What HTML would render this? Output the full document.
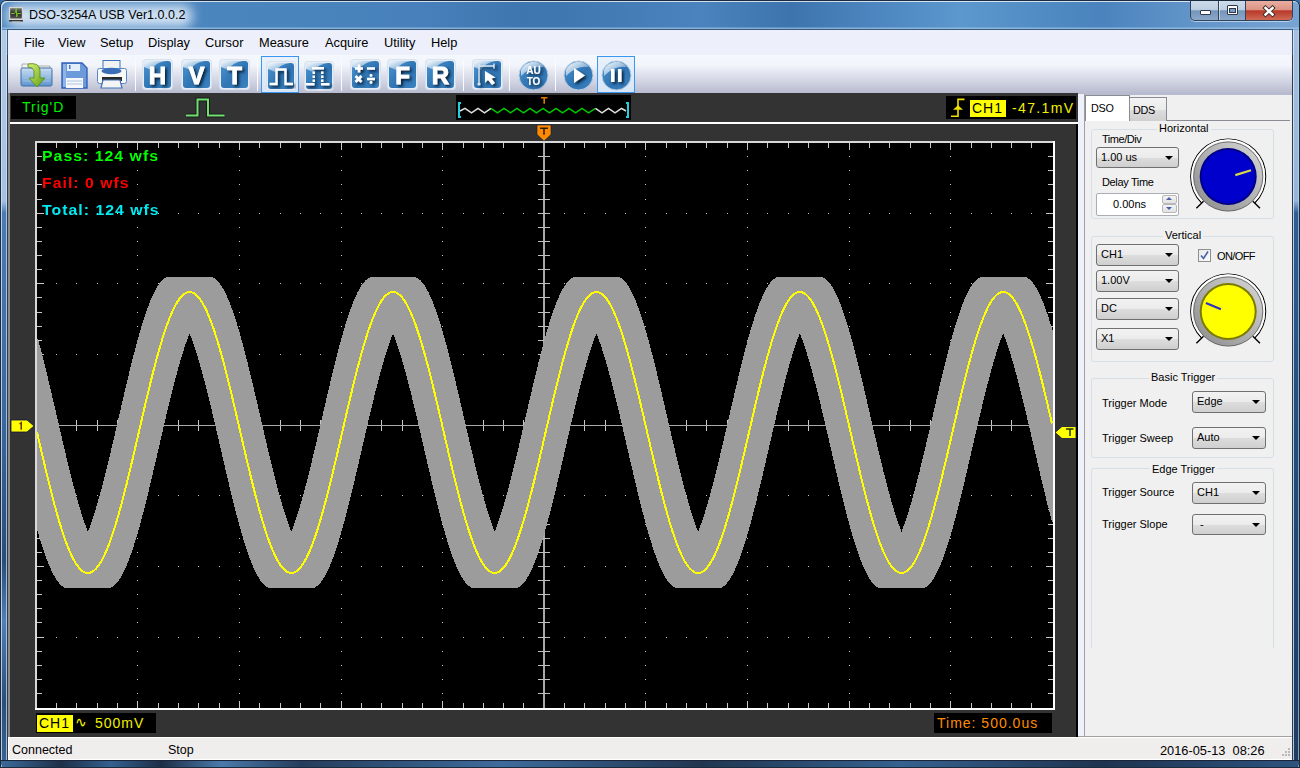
<!DOCTYPE html>
<html><head><meta charset="utf-8">
<style>
*{margin:0;padding:0;box-sizing:border-box}
html,body{width:1300px;height:768px;overflow:hidden;background:#3a6ea8;font-family:"Liberation Sans",sans-serif}
.a{position:absolute}
#frame{left:0;top:0;width:1300px;height:768px;border-radius:7px 7px 0 0;background:#1c2c40}
#lf{left:0px;top:1px;width:8px;height:766px;border-radius:6px 0 0 0;background:linear-gradient(180deg,#b3cbe6 0,#a6c1e0 200px,#4a7bb4 212px,#3a679c 420px,#294d78 560px,#4f80b6 620px,#2a4e78 700px,#3a6494 767px);border-left:1px solid #1c2c40;border-right:1px solid #2a3a50;box-shadow:inset 1px 0 0 rgba(214,228,243,0.8),inset -1px 0 0 rgba(216,228,242,0.7)}
#rf{left:1292px;top:1px;width:8px;height:766px;border-radius:0 6px 0 0;background:linear-gradient(180deg,#a9c3e0 0,#95b4d8 200px,#2f5e95 212px,#24507f 400px,#1d3c62 767px);border-left:1px solid #2a3a50;border-right:1px solid #1c2c40;box-shadow:inset 1px 0 0 rgba(220,232,245,0.8),inset -1px 0 0 rgba(200,218,238,0.6)}
#bf{left:1px;top:760px;width:1298px;height:7px;background:linear-gradient(90deg,#3c6a9c 0,#1e3048 60px,#35608f 110px,#1c2e46 160px,#4a7aab 220px,#253d5c 300px,#3e6b9c 500px,#203650 700px,#36628f 900px,#1e3350 1100px,#2d547f 1299px);border-top:1px solid #1a2638;border-radius:0 0 4px 4px}
#title{left:1px;top:1px;width:1298px;height:29px;background:linear-gradient(90deg,#4f88c0 0,#4a84bd 300px,#4780ba 420px,#3e76b0 520px,#3f78b1 560px,#4a83bd 700px,#3d74ad 790px,#4c85bf 870px,#5c97cd 960px,#4a83bd 1100px,#5f93c8 1180px,#78a4d2 1298px);border-radius:6px 6px 0 0;overflow:hidden;box-shadow:inset 1px 1px 0 rgba(255,255,255,0.75)}
#glow{left:6px;top:4px;width:185px;height:22px;background:#d2e3f4;filter:blur(6px);border-radius:8px}
#ttext{left:29px;top:8px;font-size:12.5px;color:#000;white-space:nowrap}
#menu{left:7px;top:29px;width:1286px;height:26px;background:#edf0fa;border-top:1px solid #3a5a80;border-left:1px solid #3a5a80;border-right:1px solid #3a5a80}
.mi{top:35px;font-size:12.8px;color:#000}
#tool{left:8px;top:55px;width:1284px;height:40px;background:linear-gradient(180deg,#f4f7fc 0,#f2f5fb 10px,#e2e5ef 18px,#d0d3e1 27px,#bbbdd1 37px,#b8bacf 38px)}
#scope{left:8px;top:93px;width:1070px;height:644px;background:#333;border-left:2px solid #8a8a8a}
#rstrip{left:1078px;top:94px;width:7px;height:643px;background:#eef0fa;border-right:1px solid #a0a0a0}
#panel{left:1085px;top:95px;width:207px;height:642px;background:#f0f0f0}
#status{left:8px;top:737px;width:1284px;height:23px;background:#f0eded;border-top:1px solid #fff;border-left:1px solid #fff;border-bottom:1px solid #fff}
.st{top:743px;font-size:12.5px;color:#000}
.sc{font-family:"Liberation Sans",sans-serif;white-space:nowrap;letter-spacing:1px}
.p{font-size:11px;color:#000;white-space:nowrap}
.gb{border:1px solid #d5dfe5;border-radius:3px}
.gl{background:#f0f0f0;padding:0 2px;font-size:11px;color:#000;white-space:nowrap}
.cb{border:1px solid #707070;border-radius:3px;background:linear-gradient(180deg,#f2f2f2 0,#ebebeb 50%,#dddddd 51%,#cfcfcf 100%);font-size:11px;color:#000;padding-left:4px;line-height:19px;white-space:nowrap}
.cb:after{content:"";position:absolute;right:5px;top:8px;border-left:4px solid transparent;border-right:4px solid transparent;border-top:4px solid #000}
</style></head><body>
<div id="frame" class="a"></div>
<div id="lf" class="a"></div><div id="rf" class="a"></div><div id="bf" class="a"></div><div id="title" class="a"><div id="glow" class="a"></div><div class="a" style="left:0;top:26px;width:1298px;height:2px;background:linear-gradient(180deg,rgba(170,205,235,0.2),rgba(170,205,235,0.75))"></div></div>
<svg class="a" style="left:9px;top:7px" width="14" height="16" viewBox="0 0 14 16">
<defs><linearGradient id="scr" x1="0" y1="0" x2="0" y2="1"><stop offset="0" stop-color="#777"/><stop offset="0.5" stop-color="#2a2a2a"/><stop offset="1" stop-color="#555"/></linearGradient></defs>
<rect x="0" y="0" width="14" height="13.5" fill="#d8d6d2"/>
<rect x="1.2" y="1.2" width="11.6" height="10.3" fill="url(#scr)"/>
<path d="M2 6.5 h3.5 l1 -1.5 l0.8 -4 l0.4 9 l0.8 -3.5 h3.5" fill="none" stroke="#78c020" stroke-width="1"/>
<rect x="0" y="13.2" width="14" height="1.2" fill="#111"/>
<rect x="3" y="14.4" width="8" height="1.4" fill="#bdbdbd"/>
</svg>

<div id="ttext" class="a">DSO-3254A USB Ver1.0.0.2</div>
<div class="a" style="left:1190px;top:1px;width:103px;height:20px;border:1px solid #2f435a;border-top:none;border-radius:0 0 5px 5px;overflow:hidden;box-shadow:0 1px 0 rgba(230,240,250,0.6);background:linear-gradient(180deg,#cddbea 0,#bccfe2 45%,#7595b9 52%,#8aa8c9 100%)">
<div class="a" style="left:27px;top:0;width:1px;height:19px;background:#2f435a;box-shadow:1px 0 0 rgba(255,255,255,0.5)"></div>
<div class="a" style="left:54px;top:0;width:1px;height:19px;background:#2f435a"></div>
<div class="a" style="left:55px;top:0;width:47px;height:19px;background:linear-gradient(180deg,#e9aea2 0,#dc9484 45%,#b8392a 52%,#cf6a55 100%)"></div>
<div class="a" style="left:9px;top:9px;width:11px;height:5px;background:#fff;border:1px solid #303848;border-radius:1px"></div>
<div class="a" style="left:36px;top:4px;width:11px;height:10px;border:1px solid #303848;background:#fff;border-radius:1px"></div>
<div class="a" style="left:38px;top:7px;width:7px;height:5px;border:1px solid #303848;background:#7a9cc4"></div>
<svg class="a" style="left:71px;top:4px" width="15" height="13"><path d="M3.5 3 L10.5 9.5 M10.5 3 L3.5 9.5" stroke="#3a3030" stroke-width="4.4" stroke-linecap="square"/><path d="M3.5 3 L10.5 9.5 M10.5 3 L3.5 9.5" stroke="#fff" stroke-width="2.4" stroke-linecap="square"/></svg>
</div>

<div id="menu" class="a"></div>
<div class="a mi" style="left:24px">File</div>
<div class="a mi" style="left:58px">View</div>
<div class="a mi" style="left:100px">Setup</div>
<div class="a mi" style="left:148px">Display</div>
<div class="a mi" style="left:205px">Cursor</div>
<div class="a mi" style="left:259px">Measure</div>
<div class="a mi" style="left:325px">Acquire</div>
<div class="a mi" style="left:384px">Utility</div>
<div class="a mi" style="left:431px">Help</div>
<div id="tool" class="a"></div>
<svg class="a" width="0" height="0" style="left:0;top:0"><defs>
<linearGradient id="bg1" x1="0" y1="0" x2="1" y2="1"><stop offset="0" stop-color="#4d96d2"/><stop offset="0.55" stop-color="#2f74b3"/><stop offset="1" stop-color="#3a82c0"/></linearGradient>
<linearGradient id="hl" x1="0" y1="0" x2="1" y2="1"><stop offset="0" stop-color="#ffffff" stop-opacity="0.95"/><stop offset="1" stop-color="#ffffff" stop-opacity="0.1"/></linearGradient>
<filter id="ds" x="-30%" y="-30%" width="160%" height="160%"><feGaussianBlur in="SourceAlpha" stdDeviation="1.4"/><feOffset dx="1.6" dy="1.8" result="b"/><feFlood flood-color="#081a30" flood-opacity="0.95"/><feComposite in2="b" operator="in"/><feMerge><feMergeNode/><feMergeNode in="SourceGraphic"/></feMerge></filter>
</defs></svg>
<div class="a" style="left:261px;top:56px;width:38px;height:37px;border:1.5px solid #3b96f0;background:linear-gradient(180deg,#e9f2fc,#d6e6f7)"></div>
<div class="a" style="left:597px;top:56px;width:38px;height:37px;border:1.5px solid #3b96f0;background:linear-gradient(180deg,#e9f2fc,#d6e6f7)"></div>
<div class="a" style="left:135px;top:58px;width:1px;height:33px;background:#c4c7d4;border-right:1px solid #fafbfe"></div>
<div class="a" style="left:257px;top:58px;width:1px;height:33px;background:#c4c7d4;border-right:1px solid #fafbfe"></div>
<div class="a" style="left:341px;top:58px;width:1px;height:33px;background:#c4c7d4;border-right:1px solid #fafbfe"></div>
<div class="a" style="left:463px;top:58px;width:1px;height:33px;background:#c4c7d4;border-right:1px solid #fafbfe"></div>
<div class="a" style="left:509px;top:58px;width:1px;height:33px;background:#c4c7d4;border-right:1px solid #fafbfe"></div>
<div class="a" style="left:555px;top:58px;width:1px;height:33px;background:#c4c7d4;border-right:1px solid #fafbfe"></div>
<svg class="a" style="left:142px;top:59px" width="31" height="31" viewBox="0 0 31 31"><rect x="0.5" y="0.5" width="30" height="30" rx="3" fill="#e6edf6" stroke="#d8e2ee" stroke-width="1"/><rect x="2" y="2" width="27" height="27" rx="3" fill="url(#bg1)"/><path d="M2 4 Q2 2 4 2 H24 Q14 3 9 11 Q5 9 2 8 Z" fill="url(#hl)"/><text x="15.5" y="25" font-family="Liberation Sans" font-weight="bold" font-size="24" fill="#fff" stroke="#fff" stroke-width="0.9" text-anchor="middle" filter="url(#ds)">H</text></svg>
<svg class="a" style="left:181px;top:59px" width="31" height="31" viewBox="0 0 31 31"><rect x="0.5" y="0.5" width="30" height="30" rx="3" fill="#e6edf6" stroke="#d8e2ee" stroke-width="1"/><rect x="2" y="2" width="27" height="27" rx="3" fill="url(#bg1)"/><path d="M2 4 Q2 2 4 2 H24 Q14 3 9 11 Q5 9 2 8 Z" fill="url(#hl)"/><text x="15.5" y="25" font-family="Liberation Sans" font-weight="bold" font-size="24" fill="#fff" stroke="#fff" stroke-width="0.9" text-anchor="middle" filter="url(#ds)">V</text></svg>
<svg class="a" style="left:219px;top:59px" width="31" height="31" viewBox="0 0 31 31"><rect x="0.5" y="0.5" width="30" height="30" rx="3" fill="#e6edf6" stroke="#d8e2ee" stroke-width="1"/><rect x="2" y="2" width="27" height="27" rx="3" fill="url(#bg1)"/><path d="M2 4 Q2 2 4 2 H24 Q14 3 9 11 Q5 9 2 8 Z" fill="url(#hl)"/><text x="15.5" y="25" font-family="Liberation Sans" font-weight="bold" font-size="24" fill="#fff" stroke="#fff" stroke-width="0.9" text-anchor="middle" filter="url(#ds)">T</text></svg>
<svg class="a" style="left:266px;top:61px" width="30" height="30" viewBox="0 0 30 30"><rect x="0.5" y="0.5" width="29" height="29" rx="3" fill="#e6edf6" stroke="#d8e2ee" stroke-width="1"/><rect x="2" y="2" width="26" height="26" rx="3" fill="url(#bg1)"/><path d="M2 4 Q2 2 4 2 H24 Q14 3 9 11 Q5 9 2 8 Z" fill="url(#hl)"/><path d="M3.5 23 h7 v-14.5 h9 v14.5 h7.5" fill="none" stroke="#fff" stroke-width="2.4" filter="url(#ds)"/></svg>
<svg class="a" style="left:304px;top:61px" width="30" height="30" viewBox="0 0 30 30"><rect x="0.5" y="0.5" width="29" height="29" rx="3" fill="#e6edf6" stroke="#d8e2ee" stroke-width="1"/><rect x="2" y="2" width="26" height="26" rx="3" fill="url(#bg1)"/><path d="M2 4 Q2 2 4 2 H24 Q14 3 9 11 Q5 9 2 8 Z" fill="url(#hl)"/><g fill="#fff" filter="url(#ds)"><rect x="8" y="6" width="12" height="2.5"/><rect x="8.5" y="10.5" width="2.5" height="2.5"/><rect x="17" y="10.5" width="2.5" height="2.5"/><rect x="8.5" y="14.5" width="2.5" height="2.5"/><rect x="17" y="14.5" width="2.5" height="2.5"/><rect x="8.5" y="18.5" width="2.5" height="2.5"/><rect x="17" y="18.5" width="2.5" height="2.5"/><rect x="2" y="22" width="8.5" height="2.5"/><rect x="17" y="22" width="8.5" height="2.5"/></g></svg>
<svg class="a" style="left:350px;top:59px" width="31" height="31" viewBox="0 0 31 31"><rect x="0.5" y="0.5" width="30" height="30" rx="3" fill="#e6edf6" stroke="#d8e2ee" stroke-width="1"/><rect x="2" y="2" width="27" height="27" rx="3" fill="url(#bg1)"/><path d="M2 4 Q2 2 4 2 H24 Q14 3 9 11 Q5 9 2 8 Z" fill="url(#hl)"/><g fill="#fff" filter="url(#ds)"><path d="M5 9.5 h8 M9 5.5 v8 M17 9.5 h8 M5.5 17 l6 6 M11.5 17 l-6 6 M17 20 h8" stroke="#fff" stroke-width="2.6"/><circle cx="21" cy="16.5" r="1.4"/><circle cx="21" cy="23.5" r="1.4"/></g></svg>
<svg class="a" style="left:387px;top:59px" width="31" height="31" viewBox="0 0 31 31"><rect x="0.5" y="0.5" width="30" height="30" rx="3" fill="#e6edf6" stroke="#d8e2ee" stroke-width="1"/><rect x="2" y="2" width="27" height="27" rx="3" fill="url(#bg1)"/><path d="M2 4 Q2 2 4 2 H24 Q14 3 9 11 Q5 9 2 8 Z" fill="url(#hl)"/><text x="15.5" y="25" font-family="Liberation Sans" font-weight="bold" font-size="24" fill="#fff" stroke="#fff" stroke-width="0.9" text-anchor="middle" filter="url(#ds)">F</text></svg>
<svg class="a" style="left:425px;top:59px" width="31" height="31" viewBox="0 0 31 31"><rect x="0.5" y="0.5" width="30" height="30" rx="3" fill="#e6edf6" stroke="#d8e2ee" stroke-width="1"/><rect x="2" y="2" width="27" height="27" rx="3" fill="url(#bg1)"/><path d="M2 4 Q2 2 4 2 H24 Q14 3 9 11 Q5 9 2 8 Z" fill="url(#hl)"/><text x="15.5" y="25" font-family="Liberation Sans" font-weight="bold" font-size="24" fill="#fff" stroke="#fff" stroke-width="0.9" text-anchor="middle" filter="url(#ds)">R</text></svg>
<svg class="a" style="left:472px;top:59px" width="31" height="31" viewBox="0 0 31 31"><rect x="0.5" y="0.5" width="30" height="30" rx="3" fill="#e6edf6" stroke="#d8e2ee" stroke-width="1"/><rect x="2" y="2" width="27" height="27" rx="3" fill="url(#bg1)"/><path d="M2 4 Q2 2 4 2 H24 Q14 3 9 11 Q5 9 2 8 Z" fill="url(#hl)"/><g filter="url(#ds)"><path d="M7 5 v20 M7 7 h15 M22 4.5 v5" fill="none" stroke="#d8e4f0" stroke-width="1.4"/><circle cx="7" cy="25" r="1.6" fill="#d8e4f0"/><path d="M13 12 L13 24 L16 21 L20 26 L23 24 L19.5 19.5 L23.5 18.5 Z" fill="#fff"/></g></svg>
<svg class="a" style="left:518px;top:60px" width="31" height="31" viewBox="0 0 31 31"><circle cx="15.5" cy="15.5" r="14.5" fill="url(#bg1)" stroke="#b8cde0" stroke-width="1"/><path d="M3 10 A13.5 13.5 0 0 1 26 7 Q14 5 3 16 Z" fill="url(#hl)"/><g filter="url(#ds)"><text x="15.5" y="14" font-family="Liberation Sans" font-weight="bold" font-size="10" fill="#fff" text-anchor="middle">AU</text><text x="15.5" y="24.5" font-family="Liberation Sans" font-weight="bold" font-size="10" fill="#fff" text-anchor="middle">TO</text></g></svg>
<svg class="a" style="left:563px;top:60px" width="31" height="31" viewBox="0 0 31 31"><circle cx="15.5" cy="15.5" r="14.5" fill="url(#bg1)" stroke="#b8cde0" stroke-width="1"/><path d="M3 10 A13.5 13.5 0 0 1 26 7 Q14 5 3 16 Z" fill="url(#hl)"/><path d="M11 8 L22 15.5 L11 23 Z" fill="#fff" filter="url(#ds)"/></svg>
<svg class="a" style="left:601px;top:60px" width="31" height="31" viewBox="0 0 31 31"><circle cx="15.5" cy="15.5" r="14.5" fill="url(#bg1)" stroke="#b8cde0" stroke-width="1"/><path d="M3 10 A13.5 13.5 0 0 1 26 7 Q14 5 3 16 Z" fill="url(#hl)"/><g fill="#fff" filter="url(#ds)"><rect x="10" y="9" width="3.5" height="13"/><rect x="17" y="9" width="3.5" height="13"/></g></svg>
<svg class="a" style="left:19px;top:60px" width="34" height="30" viewBox="0 0 34 30">
<defs><linearGradient id="fd" x1="0" y1="0" x2="0" y2="1"><stop offset="0" stop-color="#cfe0f2"/><stop offset="1" stop-color="#5d94cf"/></linearGradient>
<linearGradient id="ar" x1="0" y1="0" x2="1" y2="1"><stop offset="0" stop-color="#d9f07a"/><stop offset="1" stop-color="#5f9e10"/></linearGradient></defs>
<path d="M3 4 h9 l2 2 h17 v4 H3 Z" fill="#f4f4f4" stroke="#a0a0a0" stroke-width="0.8"/>
<rect x="2" y="8" width="31" height="18" rx="1.5" fill="url(#fd)" stroke="#3c6fa8" stroke-width="1"/>
<path d="M4 12 h27 M4 15 h27 M4 18 h27 M4 21 h27" stroke="#a8c8e8" stroke-width="0.7"/>
<path d="M9 4 Q20 2 21 10 V18 h5 L18 27 L10 18 h5 V11 Q14 7 9 7 Z" fill="url(#ar)" stroke="#4f8a10" stroke-width="0.8"/>
</svg>
<svg class="a" style="left:61px;top:62px" width="28" height="27" viewBox="0 0 28 27">
<path d="M1 1 H21 L26 6 V26 H1 Z" fill="#6d9ad8" stroke="#2f62b8" stroke-width="1.4"/>
<rect x="6" y="2" width="13" height="7" fill="#e4eefa"/><rect x="8" y="3" width="1.5" height="4" fill="#4a7bc4"/>
<rect x="5" y="16" width="17" height="10" fill="#f6f8fc"/>
<path d="M6 19 h15 M6 22 h15" stroke="#9bb6dd" stroke-width="0.8"/>
<rect x="2" y="2" width="3" height="23" fill="#8fb4e6"/>
</svg>
<svg class="a" style="left:96px;top:59px" width="32" height="31" viewBox="0 0 32 31">
<rect x="7" y="1.5" width="17" height="12" fill="#f2f2f2" stroke="#3f74b8" stroke-width="1"/>
<rect x="1.5" y="9.5" width="29" height="15" rx="2" fill="#f8f8f8" stroke="#5a88c4" stroke-width="1"/>
<ellipse cx="15.5" cy="12" rx="10" ry="3.3" fill="#3a6fb8"/>
<rect x="6" y="18" width="20" height="4" fill="#2a2a2a"/>
<path d="M7 21 L5 29 H26 L24 21 Z" fill="#f4f4f4" stroke="#3f74b8" stroke-width="1.2"/>
</svg>
<div id="scope" class="a"></div>
<svg class="a" style="left:0;top:0" width="1300" height="768" viewBox="0 0 1300 768">
<rect x="1076" y="124" width="2" height="613" fill="#000"/>
<rect x="10" y="122" width="1068" height="2" fill="#fff"/>
<rect x="11" y="96" width="65" height="23" fill="#000"/>
<rect x="456" y="95" width="175" height="25" fill="#000"/>
<rect x="946" y="96" width="130" height="23" fill="#000"/>
<rect x="37" y="143" width="1016" height="565" fill="#000"/>
<path fill="#c8c8c8" d="M137 156h1v1h-1zM137 170h1v1h-1zM137 184h1v1h-1zM137 199h1v1h-1zM137 213h1v1h-1zM137 227h1v1h-1zM137 241h1v1h-1zM137 255h1v1h-1zM137 269h1v1h-1zM137 283h1v1h-1zM137 297h1v1h-1zM137 312h1v1h-1zM137 326h1v1h-1zM137 340h1v1h-1zM137 354h1v1h-1zM137 368h1v1h-1zM137 382h1v1h-1zM137 396h1v1h-1zM137 410h1v1h-1zM137 425h1v1h-1zM137 439h1v1h-1zM137 453h1v1h-1zM137 467h1v1h-1zM137 481h1v1h-1zM137 495h1v1h-1zM137 509h1v1h-1zM137 524h1v1h-1zM137 538h1v1h-1zM137 552h1v1h-1zM137 566h1v1h-1zM137 580h1v1h-1zM137 594h1v1h-1zM137 608h1v1h-1zM137 622h1v1h-1zM137 637h1v1h-1zM137 651h1v1h-1zM137 665h1v1h-1zM137 679h1v1h-1zM137 693h1v1h-1zM239 156h1v1h-1zM239 170h1v1h-1zM239 184h1v1h-1zM239 199h1v1h-1zM239 213h1v1h-1zM239 227h1v1h-1zM239 241h1v1h-1zM239 255h1v1h-1zM239 269h1v1h-1zM239 283h1v1h-1zM239 297h1v1h-1zM239 312h1v1h-1zM239 326h1v1h-1zM239 340h1v1h-1zM239 354h1v1h-1zM239 368h1v1h-1zM239 382h1v1h-1zM239 396h1v1h-1zM239 410h1v1h-1zM239 425h1v1h-1zM239 439h1v1h-1zM239 453h1v1h-1zM239 467h1v1h-1zM239 481h1v1h-1zM239 495h1v1h-1zM239 509h1v1h-1zM239 524h1v1h-1zM239 538h1v1h-1zM239 552h1v1h-1zM239 566h1v1h-1zM239 580h1v1h-1zM239 594h1v1h-1zM239 608h1v1h-1zM239 622h1v1h-1zM239 637h1v1h-1zM239 651h1v1h-1zM239 665h1v1h-1zM239 679h1v1h-1zM239 693h1v1h-1zM341 156h1v1h-1zM341 170h1v1h-1zM341 184h1v1h-1zM341 199h1v1h-1zM341 213h1v1h-1zM341 227h1v1h-1zM341 241h1v1h-1zM341 255h1v1h-1zM341 269h1v1h-1zM341 283h1v1h-1zM341 297h1v1h-1zM341 312h1v1h-1zM341 326h1v1h-1zM341 340h1v1h-1zM341 354h1v1h-1zM341 368h1v1h-1zM341 382h1v1h-1zM341 396h1v1h-1zM341 410h1v1h-1zM341 425h1v1h-1zM341 439h1v1h-1zM341 453h1v1h-1zM341 467h1v1h-1zM341 481h1v1h-1zM341 495h1v1h-1zM341 509h1v1h-1zM341 524h1v1h-1zM341 538h1v1h-1zM341 552h1v1h-1zM341 566h1v1h-1zM341 580h1v1h-1zM341 594h1v1h-1zM341 608h1v1h-1zM341 622h1v1h-1zM341 637h1v1h-1zM341 651h1v1h-1zM341 665h1v1h-1zM341 679h1v1h-1zM341 693h1v1h-1zM442 156h1v1h-1zM442 170h1v1h-1zM442 184h1v1h-1zM442 199h1v1h-1zM442 213h1v1h-1zM442 227h1v1h-1zM442 241h1v1h-1zM442 255h1v1h-1zM442 269h1v1h-1zM442 283h1v1h-1zM442 297h1v1h-1zM442 312h1v1h-1zM442 326h1v1h-1zM442 340h1v1h-1zM442 354h1v1h-1zM442 368h1v1h-1zM442 382h1v1h-1zM442 396h1v1h-1zM442 410h1v1h-1zM442 425h1v1h-1zM442 439h1v1h-1zM442 453h1v1h-1zM442 467h1v1h-1zM442 481h1v1h-1zM442 495h1v1h-1zM442 509h1v1h-1zM442 524h1v1h-1zM442 538h1v1h-1zM442 552h1v1h-1zM442 566h1v1h-1zM442 580h1v1h-1zM442 594h1v1h-1zM442 608h1v1h-1zM442 622h1v1h-1zM442 637h1v1h-1zM442 651h1v1h-1zM442 665h1v1h-1zM442 679h1v1h-1zM442 693h1v1h-1zM645 156h1v1h-1zM645 170h1v1h-1zM645 184h1v1h-1zM645 199h1v1h-1zM645 213h1v1h-1zM645 227h1v1h-1zM645 241h1v1h-1zM645 255h1v1h-1zM645 269h1v1h-1zM645 283h1v1h-1zM645 297h1v1h-1zM645 312h1v1h-1zM645 326h1v1h-1zM645 340h1v1h-1zM645 354h1v1h-1zM645 368h1v1h-1zM645 382h1v1h-1zM645 396h1v1h-1zM645 410h1v1h-1zM645 425h1v1h-1zM645 439h1v1h-1zM645 453h1v1h-1zM645 467h1v1h-1zM645 481h1v1h-1zM645 495h1v1h-1zM645 509h1v1h-1zM645 524h1v1h-1zM645 538h1v1h-1zM645 552h1v1h-1zM645 566h1v1h-1zM645 580h1v1h-1zM645 594h1v1h-1zM645 608h1v1h-1zM645 622h1v1h-1zM645 637h1v1h-1zM645 651h1v1h-1zM645 665h1v1h-1zM645 679h1v1h-1zM645 693h1v1h-1zM747 156h1v1h-1zM747 170h1v1h-1zM747 184h1v1h-1zM747 199h1v1h-1zM747 213h1v1h-1zM747 227h1v1h-1zM747 241h1v1h-1zM747 255h1v1h-1zM747 269h1v1h-1zM747 283h1v1h-1zM747 297h1v1h-1zM747 312h1v1h-1zM747 326h1v1h-1zM747 340h1v1h-1zM747 354h1v1h-1zM747 368h1v1h-1zM747 382h1v1h-1zM747 396h1v1h-1zM747 410h1v1h-1zM747 425h1v1h-1zM747 439h1v1h-1zM747 453h1v1h-1zM747 467h1v1h-1zM747 481h1v1h-1zM747 495h1v1h-1zM747 509h1v1h-1zM747 524h1v1h-1zM747 538h1v1h-1zM747 552h1v1h-1zM747 566h1v1h-1zM747 580h1v1h-1zM747 594h1v1h-1zM747 608h1v1h-1zM747 622h1v1h-1zM747 637h1v1h-1zM747 651h1v1h-1zM747 665h1v1h-1zM747 679h1v1h-1zM747 693h1v1h-1zM849 156h1v1h-1zM849 170h1v1h-1zM849 184h1v1h-1zM849 199h1v1h-1zM849 213h1v1h-1zM849 227h1v1h-1zM849 241h1v1h-1zM849 255h1v1h-1zM849 269h1v1h-1zM849 283h1v1h-1zM849 297h1v1h-1zM849 312h1v1h-1zM849 326h1v1h-1zM849 340h1v1h-1zM849 354h1v1h-1zM849 368h1v1h-1zM849 382h1v1h-1zM849 396h1v1h-1zM849 410h1v1h-1zM849 425h1v1h-1zM849 439h1v1h-1zM849 453h1v1h-1zM849 467h1v1h-1zM849 481h1v1h-1zM849 495h1v1h-1zM849 509h1v1h-1zM849 524h1v1h-1zM849 538h1v1h-1zM849 552h1v1h-1zM849 566h1v1h-1zM849 580h1v1h-1zM849 594h1v1h-1zM849 608h1v1h-1zM849 622h1v1h-1zM849 637h1v1h-1zM849 651h1v1h-1zM849 665h1v1h-1zM849 679h1v1h-1zM849 693h1v1h-1zM950 156h1v1h-1zM950 170h1v1h-1zM950 184h1v1h-1zM950 199h1v1h-1zM950 213h1v1h-1zM950 227h1v1h-1zM950 241h1v1h-1zM950 255h1v1h-1zM950 269h1v1h-1zM950 283h1v1h-1zM950 297h1v1h-1zM950 312h1v1h-1zM950 326h1v1h-1zM950 340h1v1h-1zM950 354h1v1h-1zM950 368h1v1h-1zM950 382h1v1h-1zM950 396h1v1h-1zM950 410h1v1h-1zM950 425h1v1h-1zM950 439h1v1h-1zM950 453h1v1h-1zM950 467h1v1h-1zM950 481h1v1h-1zM950 495h1v1h-1zM950 509h1v1h-1zM950 524h1v1h-1zM950 538h1v1h-1zM950 552h1v1h-1zM950 566h1v1h-1zM950 580h1v1h-1zM950 594h1v1h-1zM950 608h1v1h-1zM950 622h1v1h-1zM950 637h1v1h-1zM950 651h1v1h-1zM950 665h1v1h-1zM950 679h1v1h-1zM950 693h1v1h-1zM56 213h1v1h-1zM76 213h1v1h-1zM97 213h1v1h-1zM117 213h1v1h-1zM158 213h1v1h-1zM178 213h1v1h-1zM198 213h1v1h-1zM219 213h1v1h-1zM259 213h1v1h-1zM280 213h1v1h-1zM300 213h1v1h-1zM320 213h1v1h-1zM361 213h1v1h-1zM381 213h1v1h-1zM402 213h1v1h-1zM422 213h1v1h-1zM463 213h1v1h-1zM483 213h1v1h-1zM503 213h1v1h-1zM523 213h1v1h-1zM564 213h1v1h-1zM584 213h1v1h-1zM605 213h1v1h-1zM625 213h1v1h-1zM666 213h1v1h-1zM686 213h1v1h-1zM706 213h1v1h-1zM727 213h1v1h-1zM767 213h1v1h-1zM788 213h1v1h-1zM808 213h1v1h-1zM828 213h1v1h-1zM869 213h1v1h-1zM889 213h1v1h-1zM910 213h1v1h-1zM930 213h1v1h-1zM971 213h1v1h-1zM991 213h1v1h-1zM1011 213h1v1h-1zM1031 213h1v1h-1zM56 283h1v1h-1zM76 283h1v1h-1zM97 283h1v1h-1zM117 283h1v1h-1zM158 283h1v1h-1zM178 283h1v1h-1zM198 283h1v1h-1zM219 283h1v1h-1zM259 283h1v1h-1zM280 283h1v1h-1zM300 283h1v1h-1zM320 283h1v1h-1zM361 283h1v1h-1zM381 283h1v1h-1zM402 283h1v1h-1zM422 283h1v1h-1zM463 283h1v1h-1zM483 283h1v1h-1zM503 283h1v1h-1zM523 283h1v1h-1zM564 283h1v1h-1zM584 283h1v1h-1zM605 283h1v1h-1zM625 283h1v1h-1zM666 283h1v1h-1zM686 283h1v1h-1zM706 283h1v1h-1zM727 283h1v1h-1zM767 283h1v1h-1zM788 283h1v1h-1zM808 283h1v1h-1zM828 283h1v1h-1zM869 283h1v1h-1zM889 283h1v1h-1zM910 283h1v1h-1zM930 283h1v1h-1zM971 283h1v1h-1zM991 283h1v1h-1zM1011 283h1v1h-1zM1031 283h1v1h-1zM56 354h1v1h-1zM76 354h1v1h-1zM97 354h1v1h-1zM117 354h1v1h-1zM158 354h1v1h-1zM178 354h1v1h-1zM198 354h1v1h-1zM219 354h1v1h-1zM259 354h1v1h-1zM280 354h1v1h-1zM300 354h1v1h-1zM320 354h1v1h-1zM361 354h1v1h-1zM381 354h1v1h-1zM402 354h1v1h-1zM422 354h1v1h-1zM463 354h1v1h-1zM483 354h1v1h-1zM503 354h1v1h-1zM523 354h1v1h-1zM564 354h1v1h-1zM584 354h1v1h-1zM605 354h1v1h-1zM625 354h1v1h-1zM666 354h1v1h-1zM686 354h1v1h-1zM706 354h1v1h-1zM727 354h1v1h-1zM767 354h1v1h-1zM788 354h1v1h-1zM808 354h1v1h-1zM828 354h1v1h-1zM869 354h1v1h-1zM889 354h1v1h-1zM910 354h1v1h-1zM930 354h1v1h-1zM971 354h1v1h-1zM991 354h1v1h-1zM1011 354h1v1h-1zM1031 354h1v1h-1zM56 495h1v1h-1zM76 495h1v1h-1zM97 495h1v1h-1zM117 495h1v1h-1zM158 495h1v1h-1zM178 495h1v1h-1zM198 495h1v1h-1zM219 495h1v1h-1zM259 495h1v1h-1zM280 495h1v1h-1zM300 495h1v1h-1zM320 495h1v1h-1zM361 495h1v1h-1zM381 495h1v1h-1zM402 495h1v1h-1zM422 495h1v1h-1zM463 495h1v1h-1zM483 495h1v1h-1zM503 495h1v1h-1zM523 495h1v1h-1zM564 495h1v1h-1zM584 495h1v1h-1zM605 495h1v1h-1zM625 495h1v1h-1zM666 495h1v1h-1zM686 495h1v1h-1zM706 495h1v1h-1zM727 495h1v1h-1zM767 495h1v1h-1zM788 495h1v1h-1zM808 495h1v1h-1zM828 495h1v1h-1zM869 495h1v1h-1zM889 495h1v1h-1zM910 495h1v1h-1zM930 495h1v1h-1zM971 495h1v1h-1zM991 495h1v1h-1zM1011 495h1v1h-1zM1031 495h1v1h-1zM56 566h1v1h-1zM76 566h1v1h-1zM97 566h1v1h-1zM117 566h1v1h-1zM158 566h1v1h-1zM178 566h1v1h-1zM198 566h1v1h-1zM219 566h1v1h-1zM259 566h1v1h-1zM280 566h1v1h-1zM300 566h1v1h-1zM320 566h1v1h-1zM361 566h1v1h-1zM381 566h1v1h-1zM402 566h1v1h-1zM422 566h1v1h-1zM463 566h1v1h-1zM483 566h1v1h-1zM503 566h1v1h-1zM523 566h1v1h-1zM564 566h1v1h-1zM584 566h1v1h-1zM605 566h1v1h-1zM625 566h1v1h-1zM666 566h1v1h-1zM686 566h1v1h-1zM706 566h1v1h-1zM727 566h1v1h-1zM767 566h1v1h-1zM788 566h1v1h-1zM808 566h1v1h-1zM828 566h1v1h-1zM869 566h1v1h-1zM889 566h1v1h-1zM910 566h1v1h-1zM930 566h1v1h-1zM971 566h1v1h-1zM991 566h1v1h-1zM1011 566h1v1h-1zM1031 566h1v1h-1zM56 637h1v1h-1zM76 637h1v1h-1zM97 637h1v1h-1zM117 637h1v1h-1zM158 637h1v1h-1zM178 637h1v1h-1zM198 637h1v1h-1zM219 637h1v1h-1zM259 637h1v1h-1zM280 637h1v1h-1zM300 637h1v1h-1zM320 637h1v1h-1zM361 637h1v1h-1zM381 637h1v1h-1zM402 637h1v1h-1zM422 637h1v1h-1zM463 637h1v1h-1zM483 637h1v1h-1zM503 637h1v1h-1zM523 637h1v1h-1zM564 637h1v1h-1zM584 637h1v1h-1zM605 637h1v1h-1zM625 637h1v1h-1zM666 637h1v1h-1zM686 637h1v1h-1zM706 637h1v1h-1zM727 637h1v1h-1zM767 637h1v1h-1zM788 637h1v1h-1zM808 637h1v1h-1zM828 637h1v1h-1zM869 637h1v1h-1zM889 637h1v1h-1zM910 637h1v1h-1zM930 637h1v1h-1zM971 637h1v1h-1zM991 637h1v1h-1zM1011 637h1v1h-1zM1031 637h1v1h-1zM56 420h1v11h-1zM76 420h1v11h-1zM97 420h1v11h-1zM117 420h1v11h-1zM137 420h1v11h-1zM158 420h1v11h-1zM178 420h1v11h-1zM198 420h1v11h-1zM219 420h1v11h-1zM239 420h1v11h-1zM259 420h1v11h-1zM280 420h1v11h-1zM300 420h1v11h-1zM320 420h1v11h-1zM341 420h1v11h-1zM361 420h1v11h-1zM381 420h1v11h-1zM402 420h1v11h-1zM422 420h1v11h-1zM442 420h1v11h-1zM463 420h1v11h-1zM483 420h1v11h-1zM503 420h1v11h-1zM523 420h1v11h-1zM544 420h1v11h-1zM564 420h1v11h-1zM584 420h1v11h-1zM605 420h1v11h-1zM625 420h1v11h-1zM645 420h1v11h-1zM666 420h1v11h-1zM686 420h1v11h-1zM706 420h1v11h-1zM727 420h1v11h-1zM747 420h1v11h-1zM767 420h1v11h-1zM788 420h1v11h-1zM808 420h1v11h-1zM828 420h1v11h-1zM849 420h1v11h-1zM869 420h1v11h-1zM889 420h1v11h-1zM910 420h1v11h-1zM930 420h1v11h-1zM950 420h1v11h-1zM971 420h1v11h-1zM991 420h1v11h-1zM1011 420h1v11h-1zM1031 420h1v11h-1zM56 143h1v5h-1zM56 703h1v5h-1zM76 143h1v5h-1zM76 703h1v5h-1zM97 143h1v5h-1zM97 703h1v5h-1zM117 143h1v5h-1zM117 703h1v5h-1zM137 143h1v7h-1zM137 701h1v7h-1zM158 143h1v5h-1zM158 703h1v5h-1zM178 143h1v5h-1zM178 703h1v5h-1zM198 143h1v5h-1zM198 703h1v5h-1zM219 143h1v5h-1zM219 703h1v5h-1zM239 143h1v7h-1zM239 701h1v7h-1zM259 143h1v5h-1zM259 703h1v5h-1zM280 143h1v5h-1zM280 703h1v5h-1zM300 143h1v5h-1zM300 703h1v5h-1zM320 143h1v5h-1zM320 703h1v5h-1zM341 143h1v7h-1zM341 701h1v7h-1zM361 143h1v5h-1zM361 703h1v5h-1zM381 143h1v5h-1zM381 703h1v5h-1zM402 143h1v5h-1zM402 703h1v5h-1zM422 143h1v5h-1zM422 703h1v5h-1zM442 143h1v7h-1zM442 701h1v7h-1zM463 143h1v5h-1zM463 703h1v5h-1zM483 143h1v5h-1zM483 703h1v5h-1zM503 143h1v5h-1zM503 703h1v5h-1zM523 143h1v5h-1zM523 703h1v5h-1zM544 143h1v7h-1zM544 701h1v7h-1zM564 143h1v5h-1zM564 703h1v5h-1zM584 143h1v5h-1zM584 703h1v5h-1zM605 143h1v5h-1zM605 703h1v5h-1zM625 143h1v5h-1zM625 703h1v5h-1zM645 143h1v7h-1zM645 701h1v7h-1zM666 143h1v5h-1zM666 703h1v5h-1zM686 143h1v5h-1zM686 703h1v5h-1zM706 143h1v5h-1zM706 703h1v5h-1zM727 143h1v5h-1zM727 703h1v5h-1zM747 143h1v7h-1zM747 701h1v7h-1zM767 143h1v5h-1zM767 703h1v5h-1zM788 143h1v5h-1zM788 703h1v5h-1zM808 143h1v5h-1zM808 703h1v5h-1zM828 143h1v5h-1zM828 703h1v5h-1zM849 143h1v7h-1zM849 701h1v7h-1zM869 143h1v5h-1zM869 703h1v5h-1zM889 143h1v5h-1zM889 703h1v5h-1zM910 143h1v5h-1zM910 703h1v5h-1zM930 143h1v5h-1zM930 703h1v5h-1zM950 143h1v7h-1zM950 701h1v7h-1zM971 143h1v5h-1zM971 703h1v5h-1zM991 143h1v5h-1zM991 703h1v5h-1zM1011 143h1v5h-1zM1011 703h1v5h-1zM1031 143h1v5h-1zM1031 703h1v5h-1zM37 156h5v1h-5zM1048 156h5v1h-5zM37 170h5v1h-5zM1048 170h5v1h-5zM37 184h5v1h-5zM1048 184h5v1h-5zM37 199h5v1h-5zM1048 199h5v1h-5zM37 213h7v1h-7zM1046 213h7v1h-7zM37 227h5v1h-5zM1048 227h5v1h-5zM37 241h5v1h-5zM1048 241h5v1h-5zM37 255h5v1h-5zM1048 255h5v1h-5zM37 269h5v1h-5zM1048 269h5v1h-5zM37 283h7v1h-7zM1046 283h7v1h-7zM37 297h5v1h-5zM1048 297h5v1h-5zM37 312h5v1h-5zM1048 312h5v1h-5zM37 326h5v1h-5zM1048 326h5v1h-5zM37 340h5v1h-5zM1048 340h5v1h-5zM37 354h7v1h-7zM1046 354h7v1h-7zM37 368h5v1h-5zM1048 368h5v1h-5zM37 382h5v1h-5zM1048 382h5v1h-5zM37 396h5v1h-5zM1048 396h5v1h-5zM37 410h5v1h-5zM1048 410h5v1h-5zM37 425h7v1h-7zM1046 425h7v1h-7zM37 439h5v1h-5zM1048 439h5v1h-5zM37 453h5v1h-5zM1048 453h5v1h-5zM37 467h5v1h-5zM1048 467h5v1h-5zM37 481h5v1h-5zM1048 481h5v1h-5zM37 495h7v1h-7zM1046 495h7v1h-7zM37 509h5v1h-5zM1048 509h5v1h-5zM37 524h5v1h-5zM1048 524h5v1h-5zM37 538h5v1h-5zM1048 538h5v1h-5zM37 552h5v1h-5zM1048 552h5v1h-5zM37 566h7v1h-7zM1046 566h7v1h-7zM37 580h5v1h-5zM1048 580h5v1h-5zM37 594h5v1h-5zM1048 594h5v1h-5zM37 608h5v1h-5zM1048 608h5v1h-5zM37 622h5v1h-5zM1048 622h5v1h-5zM37 637h7v1h-7zM1046 637h7v1h-7zM37 651h5v1h-5zM1048 651h5v1h-5zM37 665h5v1h-5zM1048 665h5v1h-5zM37 679h5v1h-5zM1048 679h5v1h-5zM37 693h5v1h-5zM1048 693h5v1h-5z"/><path fill="#a8a8a8" d="M543 143h2v565h-2zM37 425h1016v1h-1016z"/><path fill="#c0c0c0" d="M538 156h12v1h-12zM538 170h12v1h-12zM538 184h12v1h-12zM538 199h12v1h-12zM538 213h12v1h-12zM538 227h12v1h-12zM538 241h12v1h-12zM538 255h12v1h-12zM538 269h12v1h-12zM538 283h12v1h-12zM538 297h12v1h-12zM538 312h12v1h-12zM538 326h12v1h-12zM538 340h12v1h-12zM538 354h12v1h-12zM538 368h12v1h-12zM538 382h12v1h-12zM538 396h12v1h-12zM538 410h12v1h-12zM538 425h12v1h-12zM538 439h12v1h-12zM538 453h12v1h-12zM538 467h12v1h-12zM538 481h12v1h-12zM538 495h12v1h-12zM538 509h12v1h-12zM538 524h12v1h-12zM538 538h12v1h-12zM538 552h12v1h-12zM538 566h12v1h-12zM538 580h12v1h-12zM538 594h12v1h-12zM538 608h12v1h-12zM538 622h12v1h-12zM538 637h12v1h-12zM538 651h12v1h-12zM538 665h12v1h-12zM538 679h12v1h-12zM538 693h12v1h-12z"/>
<path fill="#9c9c9c" d="M37,339 38,339 38,341 39,341 39,345 40,345 40,348 41,348 41,352 42,352 42,356 43,356 43,360 44,360 44,364 45,364 45,368 46,368 46,372 47,372 47,376 48,376 48,381 49,381 49,385 50,385 50,389 51,389 51,393 52,393 52,398 53,398 53,402 54,402 54,406 55,406 55,410 56,410 56,415 57,415 57,419 58,419 58,423 59,423 59,428 60,428 60,432 61,432 61,436 62,436 62,441 63,441 63,445 64,445 64,449 65,449 65,453 66,453 66,458 67,458 67,462 68,462 68,466 69,466 69,470 70,470 70,474 71,474 71,478 72,478 72,482 73,482 73,486 74,486 74,489 75,489 75,493 76,493 76,497 77,497 77,500 78,500 78,504 79,504 79,507 80,507 80,510 81,510 81,514 82,514 82,517 83,517 83,520 84,520 84,523 85,523 85,525 86,525 86,528 87,528 87,531 88,531 88,530 89,530 89,528 90,528 90,525 91,525 91,522 92,522 92,519 93,519 93,516 94,516 94,513 95,513 95,510 96,510 96,506 97,506 97,503 98,503 98,499 99,499 99,496 100,496 100,492 101,492 101,489 102,489 102,485 103,485 103,481 104,481 104,477 105,477 105,473 106,473 106,469 107,469 107,465 108,465 108,461 109,461 109,457 110,457 110,453 111,453 111,448 112,448 112,444 113,444 113,440 114,440 114,436 115,436 115,431 116,431 116,427 117,427 117,423 118,423 118,418 119,418 119,414 120,414 120,410 121,410 121,405 122,405 122,401 123,401 123,397 124,397 124,392 125,392 125,388 126,388 126,384 127,384 127,380 128,380 128,376 129,376 129,371 130,371 130,367 131,367 131,363 132,363 132,359 133,359 133,355 134,355 134,352 135,352 135,348 136,348 136,344 137,344 137,340 138,340 138,337 139,337 139,333 140,333 140,330 141,330 141,326 142,326 142,323 143,323 143,320 144,320 144,317 145,317 145,314 146,314 146,311 147,311 147,308 148,308 148,306 149,306 149,303 150,303 150,300 151,300 151,298 152,298 152,296 153,296 153,294 154,294 154,292 155,292 155,290 156,290 156,288 157,288 157,286 158,286 158,285 159,285 159,283 160,283 160,282 161,282 161,281 162,281 162,280 163,280 163,279 164,279 164,278 166,278 166,277 213,277 213,278 215,278 215,279 216,279 216,280 217,280 217,281 218,281 218,282 219,282 219,283 220,283 220,285 221,285 221,286 222,286 222,288 223,288 223,289 224,289 224,291 225,291 225,293 226,293 226,295 227,295 227,298 228,298 228,300 229,300 229,302 230,302 230,305 231,305 231,308 232,308 232,310 233,310 233,313 234,313 234,316 235,316 235,319 236,319 236,322 237,322 237,326 238,326 238,329 239,329 239,332 240,332 240,336 241,336 241,340 242,340 242,343 243,343 243,347 244,347 244,351 245,351 245,355 246,355 246,359 247,359 247,362 248,362 248,367 249,367 249,371 250,371 250,375 251,375 251,379 252,379 252,383 253,383 253,387 254,387 254,392 255,392 255,396 256,396 256,400 257,400 257,404 258,404 258,409 259,409 259,413 260,413 260,417 261,417 261,422 262,422 262,426 263,426 263,430 264,430 264,435 265,435 265,439 266,439 266,443 267,443 267,448 268,448 268,452 269,452 269,456 270,456 270,460 271,460 271,464 272,464 272,468 273,468 273,472 274,472 274,476 275,476 275,480 276,480 276,484 277,484 277,488 278,488 278,492 279,492 279,495 280,495 280,499 281,499 281,502 282,502 282,506 283,506 283,509 284,509 284,512 285,512 285,515 286,515 286,518 287,518 287,521 288,521 288,524 289,524 289,527 290,527 290,530 291,530 291,531 292,531 292,529 293,529 293,526 294,526 294,523 295,523 295,520 296,520 296,517 297,517 297,514 298,514 298,511 299,511 299,508 300,508 300,504 301,504 301,501 302,501 302,497 303,497 303,494 304,494 304,490 305,490 305,486 306,486 306,483 307,483 307,479 308,479 308,475 309,475 309,471 310,471 310,467 311,467 311,463 312,463 312,458 313,458 313,454 314,454 314,450 315,450 315,446 316,446 316,442 317,442 317,437 318,437 318,433 319,433 319,429 320,429 320,424 321,424 321,420 322,420 322,416 323,416 323,411 324,411 324,407 325,407 325,403 326,403 326,398 327,398 327,394 328,394 328,390 329,390 329,386 330,386 330,381 331,381 331,377 332,377 332,373 333,373 333,369 334,369 334,365 335,365 335,361 336,361 336,357 337,357 337,353 338,353 338,349 339,349 339,345 340,345 340,342 341,342 341,338 342,338 342,335 343,335 343,331 344,331 344,328 345,328 345,324 346,324 346,321 347,321 347,318 348,318 348,315 349,315 349,312 350,312 350,309 351,309 351,307 352,307 352,304 353,304 353,301 354,301 354,299 355,299 355,297 356,297 356,295 357,295 357,292 358,292 358,291 359,291 359,289 360,289 360,287 361,287 361,285 362,285 362,284 363,284 363,283 364,283 364,282 365,282 365,280 367,280 367,279 368,279 368,278 370,278 370,277 416,277 416,278 418,278 418,279 419,279 419,280 421,280 421,282 422,282 422,283 423,283 423,284 424,284 424,285 425,285 425,287 426,287 426,289 427,289 427,291 428,291 428,292 429,292 429,295 430,295 430,297 431,297 431,299 432,299 432,301 433,301 433,304 434,304 434,307 435,307 435,309 436,309 436,312 437,312 437,315 438,315 438,318 439,318 439,321 440,321 440,324 441,324 441,328 442,328 442,331 443,331 443,335 444,335 444,338 445,338 445,342 446,342 446,345 447,345 447,349 448,349 448,353 449,353 449,357 450,357 450,361 451,361 451,365 452,365 452,369 453,369 453,373 454,373 454,377 455,377 455,381 456,381 456,386 457,386 457,390 458,390 458,394 459,394 459,398 460,398 460,403 461,403 461,407 462,407 462,411 463,411 463,416 464,416 464,420 465,420 465,424 466,424 466,429 467,429 467,433 468,433 468,437 469,437 469,442 470,442 470,446 471,446 471,450 472,450 472,454 473,454 473,458 474,458 474,463 475,463 475,467 476,467 476,471 477,471 477,475 478,475 478,479 479,479 479,483 480,483 480,486 481,486 481,490 482,490 482,494 483,494 483,497 484,497 484,501 485,501 485,504 486,504 486,508 487,508 487,511 488,511 488,514 489,514 489,517 490,517 490,520 491,520 491,523 492,523 492,526 493,526 493,529 494,529 494,531 495,531 495,530 496,530 496,527 497,527 497,524 498,524 498,521 499,521 499,518 500,518 500,515 501,515 501,512 502,512 502,509 503,509 503,506 504,506 504,502 505,502 505,499 506,499 506,495 507,495 507,492 508,492 508,488 509,488 509,484 510,484 510,480 511,480 511,476 512,476 512,472 513,472 513,468 514,468 514,464 515,464 515,460 516,460 516,456 517,456 517,452 518,452 518,448 519,448 519,443 520,443 520,439 521,439 521,435 522,435 522,430 523,430 523,426 524,426 524,422 525,422 525,417 526,417 526,413 527,413 527,409 528,409 528,404 529,404 529,400 530,400 530,396 531,396 531,392 532,392 532,387 533,387 533,383 534,383 534,379 535,379 535,375 536,375 536,371 537,371 537,367 538,367 538,362 539,362 539,359 540,359 540,355 541,355 541,351 542,351 542,347 543,347 543,343 544,343 544,340 545,340 545,336 546,336 546,332 547,332 547,329 548,329 548,326 549,326 549,322 550,322 550,319 551,319 551,316 552,316 552,313 553,313 553,310 554,310 554,308 555,308 555,305 556,305 556,302 557,302 557,300 558,300 558,298 559,298 559,295 560,295 560,293 561,293 561,291 562,291 562,289 563,289 563,288 564,288 564,286 565,286 565,285 566,285 566,283 567,283 567,282 568,282 568,281 569,281 569,280 570,280 570,279 571,279 571,278 573,278 573,277 620,277 620,278 622,278 622,279 623,279 623,280 624,280 624,281 625,281 625,282 626,282 626,283 627,283 627,285 628,285 628,286 629,286 629,288 630,288 630,290 631,290 631,292 632,292 632,294 633,294 633,296 634,296 634,298 635,298 635,300 636,300 636,303 637,303 637,306 638,306 638,308 639,308 639,311 640,311 640,314 641,314 641,317 642,317 642,320 643,320 643,323 644,323 644,326 645,326 645,330 646,330 646,333 647,333 647,337 648,337 648,340 649,340 649,344 650,344 650,348 651,348 651,352 652,352 652,355 653,355 653,359 654,359 654,363 655,363 655,367 656,367 656,371 657,371 657,376 658,376 658,380 659,380 659,384 660,384 660,388 661,388 661,392 662,392 662,397 663,397 663,401 664,401 664,405 665,405 665,410 666,410 666,414 667,414 667,418 668,418 668,423 669,423 669,427 670,427 670,431 671,431 671,436 672,436 672,440 673,440 673,444 674,444 674,448 675,448 675,453 676,453 676,457 677,457 677,461 678,461 678,465 679,465 679,469 680,469 680,473 681,473 681,477 682,477 682,481 683,481 683,485 684,485 684,489 685,489 685,492 686,492 686,496 687,496 687,499 688,499 688,503 689,503 689,506 690,506 690,510 691,510 691,513 692,513 692,516 693,516 693,519 694,519 694,522 695,522 695,525 696,525 696,528 697,528 697,530 698,530 698,531 699,531 699,528 700,528 700,525 701,525 701,523 702,523 702,520 703,520 703,517 704,517 704,514 705,514 705,510 706,510 706,507 707,507 707,504 708,504 708,500 709,500 709,497 710,497 710,493 711,493 711,489 712,489 712,486 713,486 713,482 714,482 714,478 715,478 715,474 716,474 716,470 717,470 717,466 718,466 718,462 719,462 719,458 720,458 720,453 721,453 721,449 722,449 722,445 723,445 723,441 724,441 724,436 725,436 725,432 726,432 726,428 727,428 727,423 728,423 728,419 729,419 729,415 730,415 730,410 731,410 731,406 732,406 732,402 733,402 733,398 734,398 734,393 735,393 735,389 736,389 736,385 737,385 737,381 738,381 738,376 739,376 739,372 740,372 740,368 741,368 741,364 742,364 742,360 743,360 743,356 744,356 744,352 745,352 745,348 746,348 746,345 747,345 747,341 748,341 748,337 749,337 749,334 750,334 750,330 751,330 751,327 752,327 752,324 753,324 753,321 754,321 754,317 755,317 755,314 756,314 756,312 757,312 757,309 758,309 758,306 759,306 759,303 760,303 760,301 761,301 761,299 762,299 762,296 763,296 763,294 764,294 764,292 765,292 765,290 766,290 766,288 767,288 767,287 768,287 768,285 769,285 769,284 770,284 770,282 771,282 771,281 772,281 772,280 773,280 773,279 775,279 775,278 776,278 776,277 823,277 823,278 825,278 825,279 826,279 826,280 827,280 827,281 828,281 828,282 829,282 829,283 830,283 830,284 831,284 831,286 832,286 832,287 833,287 833,289 834,289 834,291 835,291 835,293 836,293 836,295 837,295 837,297 838,297 838,299 839,299 839,302 840,302 840,304 841,304 841,307 842,307 842,310 843,310 843,313 844,313 844,316 845,316 845,319 846,319 846,322 847,322 847,325 848,325 848,328 849,328 849,332 850,332 850,335 851,335 851,339 852,339 852,342 853,342 853,346 854,346 854,350 855,350 855,354 856,354 856,358 857,358 857,362 858,362 858,366 859,366 859,370 860,370 860,374 861,374 861,378 862,378 862,382 863,382 863,386 864,386 864,391 865,391 865,395 866,395 866,399 867,399 867,404 868,404 868,408 869,408 869,412 870,412 870,417 871,417 871,421 872,421 872,425 873,425 873,430 874,430 874,434 875,434 875,438 876,438 876,442 877,442 877,447 878,447 878,451 879,451 879,455 880,455 880,459 881,459 881,463 882,463 882,467 883,467 883,472 884,472 884,475 885,475 885,479 886,479 886,483 887,483 887,487 888,487 888,491 889,491 889,494 890,494 890,498 891,498 891,502 892,502 892,505 893,505 893,508 894,508 894,512 895,512 895,515 896,515 896,518 897,518 897,521 898,521 898,524 899,524 899,526 900,526 900,529 901,529 901,532 902,532 902,529 903,529 903,526 904,526 904,524 905,524 905,521 906,521 906,518 907,518 907,515 908,515 908,512 909,512 909,508 910,508 910,505 911,505 911,502 912,502 912,498 913,498 913,494 914,494 914,491 915,491 915,487 916,487 916,483 917,483 917,479 918,479 918,475 919,475 919,472 920,472 920,467 921,467 921,463 922,463 922,459 923,459 923,455 924,455 924,451 925,451 925,447 926,447 926,442 927,442 927,438 928,438 928,434 929,434 929,430 930,430 930,425 931,425 931,421 932,421 932,417 933,417 933,412 934,412 934,408 935,408 935,404 936,404 936,399 937,399 937,395 938,395 938,391 939,391 939,386 940,386 940,382 941,382 941,378 942,378 942,374 943,374 943,370 944,370 944,366 945,366 945,362 946,362 946,358 947,358 947,354 948,354 948,350 949,350 949,346 950,346 950,342 951,342 951,339 952,339 952,335 953,335 953,332 954,332 954,328 955,328 955,325 956,325 956,322 957,322 957,319 958,319 958,316 959,316 959,313 960,313 960,310 961,310 961,307 962,307 962,304 963,304 963,302 964,302 964,299 965,299 965,297 966,297 966,295 967,295 967,293 968,293 968,291 969,291 969,289 970,289 970,287 971,287 971,286 972,286 972,284 973,284 973,283 974,283 974,282 975,282 975,281 976,281 976,280 977,280 977,279 978,279 978,278 980,278 980,277 1027,277 1027,278 1028,278 1028,279 1030,279 1030,280 1031,280 1031,281 1032,281 1032,282 1033,282 1033,284 1034,284 1034,285 1035,285 1035,287 1036,287 1036,288 1037,288 1037,290 1038,290 1038,292 1039,292 1039,294 1040,294 1040,296 1041,296 1041,299 1042,299 1042,301 1043,301 1043,303 1044,303 1044,306 1045,306 1045,309 1046,309 1046,312 1047,312 1047,314 1048,314 1048,317 1049,317 1049,321 1050,321 1050,324 1051,324 1051,327 1052,327 1052,330 1053,330 1053,522 1052,522 1052,520 1051,520 1051,516 1050,516 1050,512 1049,512 1049,508 1048,508 1048,505 1047,505 1047,501 1046,501 1046,496 1045,496 1045,492 1044,492 1044,488 1043,488 1043,484 1042,484 1042,480 1041,480 1041,476 1040,476 1040,471 1039,471 1039,467 1038,467 1038,463 1037,463 1037,458 1036,458 1036,454 1035,454 1035,450 1034,450 1034,445 1033,445 1033,441 1032,441 1032,437 1031,437 1031,432 1030,432 1030,428 1029,428 1029,424 1028,424 1028,420 1027,420 1027,415 1026,415 1026,411 1025,411 1025,407 1024,407 1024,403 1023,403 1023,399 1022,399 1022,395 1021,395 1021,391 1020,391 1020,387 1019,387 1019,383 1018,383 1018,379 1017,379 1017,375 1016,375 1016,372 1015,372 1015,368 1014,368 1014,364 1013,364 1013,361 1012,361 1012,358 1011,358 1011,354 1010,354 1010,351 1009,351 1009,348 1008,348 1008,345 1007,345 1007,342 1006,342 1006,339 1005,339 1005,337 1004,337 1004,334 1003,334 1003,335 1002,335 1002,338 1001,338 1001,340 1000,340 1000,343 999,343 999,346 998,346 998,349 997,349 997,352 996,352 996,356 995,356 995,359 994,359 994,362 993,362 993,366 992,366 992,369 991,369 991,373 990,373 990,377 989,377 989,381 988,381 988,384 987,384 987,388 986,388 986,392 985,392 985,396 984,396 984,400 983,400 983,404 982,404 982,409 981,409 981,413 980,413 980,417 979,417 979,421 978,421 978,426 977,426 977,430 976,430 976,434 975,434 975,438 974,438 974,443 973,443 973,447 972,447 972,451 971,451 971,456 970,456 970,460 969,460 969,464 968,464 968,469 967,469 967,473 966,473 966,477 965,477 965,482 964,482 964,486 963,486 963,490 962,490 962,494 961,494 961,498 960,498 960,502 959,502 959,506 958,506 958,510 957,510 957,514 956,514 956,518 955,518 955,521 954,521 954,525 953,525 953,529 952,529 952,532 951,532 951,536 950,536 950,539 949,539 949,542 948,542 948,545 947,545 947,548 946,548 946,551 945,551 945,554 944,554 944,557 943,557 943,560 942,560 942,562 941,562 941,565 940,565 940,567 939,567 939,569 938,569 938,571 937,571 937,573 936,573 936,575 935,575 935,577 934,577 934,579 933,579 933,580 932,580 932,582 931,582 931,583 930,583 930,584 929,584 929,585 928,585 928,586 927,586 927,587 925,587 925,588 878,588 878,587 876,587 876,586 875,586 875,585 874,585 874,584 873,584 873,583 872,583 872,582 871,582 871,580 870,580 870,579 869,579 869,577 868,577 868,575 867,575 867,573 866,573 866,571 865,571 865,569 864,569 864,567 863,567 863,565 862,565 862,562 861,562 861,560 860,560 860,557 859,557 859,554 858,554 858,551 857,551 857,548 856,548 856,545 855,545 855,542 854,542 854,539 853,539 853,536 852,536 852,532 851,532 851,529 850,529 850,525 849,525 849,521 848,521 848,518 847,518 847,514 846,514 846,510 845,510 845,506 844,506 844,502 843,502 843,498 842,498 842,494 841,494 841,490 840,490 840,486 839,486 839,482 838,482 838,477 837,477 837,473 836,473 836,469 835,469 835,464 834,464 834,460 833,460 833,456 832,456 832,451 831,451 831,447 830,447 830,443 829,443 829,438 828,438 828,434 827,434 827,430 826,430 826,426 825,426 825,421 824,421 824,417 823,417 823,413 822,413 822,409 821,409 821,404 820,404 820,400 819,400 819,396 818,396 818,392 817,392 817,388 816,388 816,384 815,384 815,381 814,381 814,377 813,377 813,373 812,373 812,369 811,369 811,366 810,366 810,362 809,362 809,359 808,359 808,356 807,356 807,352 806,352 806,349 805,349 805,346 804,346 804,343 803,343 803,340 802,340 802,338 801,338 801,335 800,335 800,334 799,334 799,337 798,337 798,339 797,339 797,342 796,342 796,345 795,345 795,348 794,348 794,351 793,351 793,354 792,354 792,358 791,358 791,361 790,361 790,364 789,364 789,368 788,368 788,372 787,372 787,375 786,375 786,379 785,379 785,383 784,383 784,387 783,387 783,391 782,391 782,395 781,395 781,399 780,399 780,403 779,403 779,407 778,407 778,411 777,411 777,415 776,415 776,420 775,420 775,424 774,424 774,428 773,428 773,432 772,432 772,437 771,437 771,441 770,441 770,445 769,445 769,450 768,450 768,454 767,454 767,458 766,458 766,463 765,463 765,467 764,467 764,471 763,471 763,476 762,476 762,480 761,480 761,484 760,484 760,488 759,488 759,492 758,492 758,496 757,496 757,501 756,501 756,505 755,505 755,508 754,508 754,512 753,512 753,516 752,516 752,520 751,520 751,524 750,524 750,527 749,527 749,531 748,531 748,534 747,534 747,538 746,538 746,541 745,541 745,544 744,544 744,547 743,547 743,550 742,550 742,553 741,553 741,556 740,556 740,559 739,559 739,561 738,561 738,564 737,564 737,566 736,566 736,568 735,568 735,571 734,571 734,573 733,573 733,575 732,575 732,576 731,576 731,578 730,578 730,580 729,580 729,581 728,581 728,582 727,582 727,584 726,584 726,585 725,585 725,586 723,586 723,587 722,587 722,588 675,588 675,587 673,587 673,586 672,586 672,585 671,585 671,584 670,584 670,583 669,583 669,582 668,582 668,581 667,581 667,579 666,579 666,578 665,578 665,576 664,576 664,574 663,574 663,572 662,572 662,570 661,570 661,568 660,568 660,566 659,566 659,563 658,563 658,561 657,561 657,558 656,558 656,555 655,555 655,553 654,553 654,550 653,550 653,547 652,547 652,543 651,543 651,540 650,540 650,537 649,537 649,534 648,534 648,530 647,530 647,527 646,527 646,523 645,523 645,519 644,519 644,515 643,515 643,512 642,512 642,508 641,508 641,504 640,504 640,500 639,500 639,496 638,496 638,492 637,492 637,487 636,487 636,483 635,483 635,479 634,479 634,475 633,475 633,470 632,470 632,466 631,466 631,462 630,462 630,458 629,458 629,453 628,453 628,449 627,449 627,445 626,445 626,440 625,440 625,436 624,436 624,432 623,432 623,427 622,427 622,423 621,423 621,419 620,419 620,414 619,414 619,410 618,410 618,406 617,406 617,402 616,402 616,398 615,398 615,394 614,394 614,390 613,390 613,386 612,386 612,382 611,382 611,378 610,378 610,375 609,375 609,371 608,371 608,367 607,367 607,364 606,364 606,360 605,360 605,357 604,357 604,354 603,354 603,351 602,351 602,347 601,347 601,344 600,344 600,342 599,342 599,339 598,339 598,336 597,336 597,334 596,334 596,336 595,336 595,338 594,338 594,341 593,341 593,344 592,344 592,347 591,347 591,350 590,350 590,353 589,353 589,356 588,356 588,360 587,360 587,363 586,363 586,367 585,367 585,370 584,370 584,374 583,374 583,378 582,378 582,381 581,381 581,385 580,385 580,389 579,389 579,393 578,393 578,397 577,397 577,401 576,401 576,405 575,405 575,409 574,409 574,414 573,414 573,418 572,418 572,422 571,422 571,426 570,426 570,431 569,431 569,435 568,435 568,439 567,439 567,444 566,444 566,448 565,448 565,452 564,452 564,457 563,457 563,461 562,461 562,465 561,465 561,470 560,470 560,474 559,474 559,478 558,478 558,482 557,482 557,487 556,487 556,491 555,491 555,495 554,495 554,499 553,499 553,503 552,503 552,507 551,507 551,511 550,511 550,515 549,515 549,518 548,518 548,522 547,522 547,526 546,526 546,529 545,529 545,533 544,533 544,536 543,536 543,540 542,540 542,543 541,543 541,546 540,546 540,549 539,549 539,552 538,552 538,555 537,555 537,558 536,558 536,560 535,560 535,563 534,563 534,565 533,565 533,568 532,568 532,570 531,570 531,572 530,572 530,574 529,574 529,576 528,576 528,577 527,577 527,579 526,579 526,581 525,581 525,582 524,582 524,583 523,583 523,584 522,584 522,585 521,585 521,586 520,586 520,587 518,587 518,588 471,588 471,587 470,587 470,586 468,586 468,585 467,585 467,584 466,584 466,583 465,583 465,581 464,581 464,580 463,580 463,578 462,578 462,577 461,577 461,575 460,575 460,573 459,573 459,571 458,571 458,569 457,569 457,567 456,567 456,564 455,564 455,562 454,562 454,559 453,559 453,557 452,557 452,554 451,554 451,551 450,551 450,548 449,548 449,545 448,545 448,542 447,542 447,538 446,538 446,535 445,535 445,531 444,531 444,528 443,528 443,524 442,524 442,521 441,521 441,517 440,517 440,513 439,513 439,509 438,509 438,505 437,505 437,501 436,501 436,497 435,497 435,493 434,493 434,489 433,489 433,485 432,485 432,481 431,481 431,476 430,476 430,472 429,472 429,468 428,468 428,464 427,464 427,459 426,459 426,455 425,455 425,451 424,451 424,446 423,446 423,442 422,442 422,438 421,438 421,433 420,433 420,429 419,429 419,425 418,425 418,420 417,420 417,416 416,416 416,412 415,412 415,408 414,408 414,404 413,404 413,400 412,400 412,395 411,395 411,391 410,391 410,388 409,388 409,384 408,384 408,380 407,380 407,376 406,376 406,372 405,372 405,369 404,369 404,365 403,365 403,362 402,362 402,358 401,358 401,355 400,355 400,352 399,352 399,349 398,349 398,346 397,346 397,343 396,343 396,340 395,340 395,337 394,337 394,335 392,335 392,337 391,337 391,340 390,340 390,343 389,343 389,346 388,346 388,349 387,349 387,352 386,352 386,355 385,355 385,358 384,358 384,362 383,362 383,365 382,365 382,369 381,369 381,372 380,372 380,376 379,376 379,380 378,380 378,384 377,384 377,388 376,388 376,391 375,391 375,395 374,395 374,400 373,400 373,404 372,404 372,408 371,408 371,412 370,412 370,416 369,416 369,420 368,420 368,425 367,425 367,429 366,429 366,433 365,433 365,438 364,438 364,442 363,442 363,446 362,446 362,451 361,451 361,455 360,455 360,459 359,459 359,464 358,464 358,468 357,468 357,472 356,472 356,476 355,476 355,481 354,481 354,485 353,485 353,489 352,489 352,493 351,493 351,497 350,497 350,501 349,501 349,505 348,505 348,509 347,509 347,513 346,513 346,517 345,517 345,521 344,521 344,524 343,524 343,528 342,528 342,531 341,531 341,535 340,535 340,538 339,538 339,542 338,542 338,545 337,545 337,548 336,548 336,551 335,551 335,554 334,554 334,557 333,557 333,559 332,559 332,562 331,562 331,564 330,564 330,567 329,567 329,569 328,569 328,571 327,571 327,573 326,573 326,575 325,575 325,577 324,577 324,578 323,578 323,580 322,580 322,581 321,581 321,583 320,583 320,584 319,584 319,585 318,585 318,586 316,586 316,587 315,587 315,588 268,588 268,587 266,587 266,586 265,586 265,585 264,585 264,584 263,584 263,583 262,583 262,582 261,582 261,581 260,581 260,579 259,579 259,577 258,577 258,576 257,576 257,574 256,574 256,572 255,572 255,570 254,570 254,568 253,568 253,565 252,565 252,563 251,563 251,560 250,560 250,558 249,558 249,555 248,555 248,552 247,552 247,549 246,549 246,546 245,546 245,543 244,543 244,540 243,540 243,536 242,536 242,533 241,533 241,529 240,529 240,526 239,526 239,522 238,522 238,518 237,518 237,515 236,515 236,511 235,511 235,507 234,507 234,503 233,503 233,499 232,499 232,495 231,495 231,491 230,491 230,487 229,487 229,482 228,482 228,478 227,478 227,474 226,474 226,470 225,470 225,465 224,465 224,461 223,461 223,457 222,457 222,452 221,452 221,448 220,448 220,444 219,444 219,439 218,439 218,435 217,435 217,431 216,431 216,426 215,426 215,422 214,422 214,418 213,418 213,414 212,414 212,409 211,409 211,405 210,405 210,401 209,401 209,397 208,397 208,393 207,393 207,389 206,389 206,385 205,385 205,381 204,381 204,378 203,378 203,374 202,374 202,370 201,370 201,367 200,367 200,363 199,363 199,360 198,360 198,356 197,356 197,353 196,353 196,350 195,350 195,347 194,347 194,344 193,344 193,341 192,341 192,338 191,338 191,336 190,336 190,334 189,334 189,336 188,336 188,339 187,339 187,342 186,342 186,344 185,344 185,347 184,347 184,351 183,351 183,354 182,354 182,357 181,357 181,360 180,360 180,364 179,364 179,367 178,367 178,371 177,371 177,375 176,375 176,378 175,378 175,382 174,382 174,386 173,386 173,390 172,390 172,394 171,394 171,398 170,398 170,402 169,402 169,406 168,406 168,410 167,410 167,414 166,414 166,419 165,419 165,423 164,423 164,427 163,427 163,432 162,432 162,436 161,436 161,440 160,440 160,445 159,445 159,449 158,449 158,453 157,453 157,458 156,458 156,462 155,462 155,466 154,466 154,470 153,470 153,475 152,475 152,479 151,479 151,483 150,483 150,487 149,487 149,492 148,492 148,496 147,496 147,500 146,500 146,504 145,504 145,508 144,508 144,512 143,512 143,515 142,515 142,519 141,519 141,523 140,523 140,527 139,527 139,530 138,530 138,534 137,534 137,537 136,537 136,540 135,540 135,543 134,543 134,547 133,547 133,550 132,550 132,553 131,553 131,555 130,555 130,558 129,558 129,561 128,561 128,563 127,563 127,566 126,566 126,568 125,568 125,570 124,570 124,572 123,572 123,574 122,574 122,576 121,576 121,578 120,578 120,579 119,579 119,581 118,581 118,582 117,582 117,583 116,583 116,584 115,584 115,585 114,585 114,586 113,586 113,587 111,587 111,588 64,588 64,587 63,587 63,586 61,586 61,585 60,585 60,584 59,584 59,582 58,582 58,581 57,581 57,580 56,580 56,578 55,578 55,576 54,576 54,575 53,575 53,573 52,573 52,571 51,571 51,568 50,568 50,566 49,566 49,564 48,564 48,561 47,561 47,559 46,559 46,556 45,556 45,553 44,553 44,550 43,550 43,547 42,547 42,544 41,544 41,541 40,541 40,538 39,538 39,534 38,534 38,531 37,531Z"/>
<polyline fill="none" stroke="#ffff00" stroke-width="2" shape-rendering="crispEdges" points="37,432.3 38,436.6 39,441.0 40,445.3 41,449.6 42,453.9 43,458.2 44,462.4 45,466.7 46,470.9 47,475.0 48,479.1 49,483.2 50,487.2 51,491.2 52,495.1 53,499.0 54,502.8 55,506.5 56,510.1 57,513.7 58,517.2 59,520.6 60,524.0 61,527.2 62,530.4 63,533.4 64,536.4 65,539.3 66,542.1 67,544.7 68,547.3 69,549.7 70,552.1 71,554.3 72,556.4 73,558.4 74,560.2 75,562.0 76,563.6 77,565.1 78,566.5 79,567.7 80,568.8 81,569.8 82,570.7 83,571.4 84,572.0 85,572.4 86,572.8 87,572.9 88,573.0 89,572.9 90,572.7 91,572.4 92,571.9 93,571.3 94,570.5 95,569.6 96,568.6 97,567.5 98,566.2 99,564.8 100,563.3 101,561.7 102,559.9 103,558.0 104,556.0 105,553.8 106,551.6 107,549.2 108,546.8 109,544.2 110,541.5 111,538.7 112,535.8 113,532.8 114,529.8 115,526.6 116,523.3 117,520.0 118,516.5 119,513.0 120,509.4 121,505.7 122,502.0 123,498.2 124,494.3 125,490.4 126,486.4 127,482.4 128,478.3 129,474.2 130,470.0 131,465.8 132,461.6 133,457.3 134,453.0 135,448.7 136,444.4 137,440.1 138,435.8 139,431.4 140,427.1 141,422.7 142,418.4 143,414.1 144,409.8 145,405.5 146,401.3 147,397.1 148,392.9 149,388.8 150,384.7 151,380.6 152,376.6 153,372.6 154,368.7 155,364.9 156,361.1 157,357.4 158,353.8 159,350.2 160,346.8 161,343.4 162,340.0 163,336.8 164,333.7 165,330.7 166,327.7 167,324.9 168,322.1 169,319.5 170,317.0 171,314.6 172,312.3 173,310.1 174,308.0 175,306.0 176,304.2 177,302.5 178,300.9 179,299.5 180,298.1 181,296.9 182,295.9 183,294.9 184,294.1 185,293.4 186,292.9 187,292.5 188,292.2 189,292.0 190,292.0 191,292.1 192,292.4 193,292.8 194,293.3 195,294.0 196,294.7 197,295.7 198,296.7 199,297.9 200,299.2 201,300.6 202,302.2 203,303.9 204,305.7 205,307.6 206,309.6 207,311.8 208,314.1 209,316.5 210,319.0 211,321.6 212,324.3 213,327.1 214,330.1 215,333.1 216,336.2 217,339.4 218,342.7 219,346.1 220,349.5 221,353.1 222,356.7 223,360.4 224,364.1 225,368.0 226,371.8 227,375.8 228,379.8 229,383.8 230,387.9 231,392.1 232,396.2 233,400.5 234,404.7 235,409.0 236,413.2 237,417.6 238,421.9 239,426.2 240,430.5 241,434.9 242,439.2 243,443.6 244,447.9 245,452.2 246,456.5 247,460.7 248,465.0 249,469.2 250,473.3 251,477.5 252,481.6 253,485.6 254,489.6 255,493.5 256,497.4 257,501.2 258,505.0 259,508.7 260,512.3 261,515.8 262,519.3 263,522.6 264,525.9 265,529.1 266,532.2 267,535.2 268,538.2 269,541.0 270,543.7 271,546.3 272,548.8 273,551.1 274,553.4 275,555.6 276,557.6 277,559.5 278,561.3 279,563.0 280,564.5 281,565.9 282,567.2 283,568.4 284,569.4 285,570.3 286,571.1 287,571.8 288,572.3 289,572.6 290,572.9 291,573.0 292,573.0 293,572.8 294,572.5 295,572.1 296,571.5 297,570.8 298,570.0 299,569.0 300,568.0 301,566.7 302,565.4 303,563.9 304,562.3 305,560.6 306,558.8 307,556.8 308,554.7 309,552.5 310,550.2 311,547.8 312,545.2 313,542.6 314,539.8 315,537.0 316,534.0 317,531.0 318,527.9 319,524.6 320,521.3 321,517.9 322,514.4 323,510.9 324,507.2 325,503.5 326,499.7 327,495.9 328,492.0 329,488.0 330,484.0 331,479.9 332,475.8 333,471.7 334,467.5 335,463.3 336,459.0 337,454.8 338,450.5 339,446.1 340,441.8 341,437.5 342,433.2 343,428.8 344,424.5 345,420.1 346,415.8 347,411.5 348,407.2 349,403.0 350,398.8 351,394.6 352,390.4 353,386.3 354,382.2 355,378.2 356,374.2 357,370.3 358,366.4 359,362.6 360,358.9 361,355.2 362,351.6 363,348.1 364,344.7 365,341.4 366,338.1 367,334.9 368,331.9 369,328.9 370,326.0 371,323.2 372,320.5 373,318.0 374,315.5 375,313.2 376,310.9 377,308.8 378,306.8 379,304.9 380,303.2 381,301.5 382,300.0 383,298.7 384,297.4 385,296.3 386,295.3 387,294.4 388,293.7 389,293.1 390,292.6 391,292.3 392,292.1 393,292.0 394,292.1 395,292.3 396,292.6 397,293.1 398,293.7 399,294.4 400,295.3 401,296.3 402,297.4 403,298.7 404,300.0 405,301.5 406,303.2 407,304.9 408,306.8 409,308.8 410,310.9 411,313.2 412,315.5 413,318.0 414,320.5 415,323.2 416,326.0 417,328.9 418,331.9 419,334.9 420,338.1 421,341.4 422,344.7 423,348.1 424,351.6 425,355.2 426,358.9 427,362.6 428,366.4 429,370.3 430,374.2 431,378.2 432,382.2 433,386.3 434,390.4 435,394.6 436,398.8 437,403.0 438,407.2 439,411.5 440,415.8 441,420.1 442,424.5 443,428.8 444,433.2 445,437.5 446,441.8 447,446.1 448,450.5 449,454.8 450,459.0 451,463.3 452,467.5 453,471.7 454,475.8 455,479.9 456,484.0 457,488.0 458,492.0 459,495.9 460,499.7 461,503.5 462,507.2 463,510.9 464,514.4 465,517.9 466,521.3 467,524.6 468,527.9 469,531.0 470,534.0 471,537.0 472,539.8 473,542.6 474,545.2 475,547.8 476,550.2 477,552.5 478,554.7 479,556.8 480,558.8 481,560.6 482,562.3 483,563.9 484,565.4 485,566.7 486,568.0 487,569.0 488,570.0 489,570.8 490,571.5 491,572.1 492,572.5 493,572.8 494,573.0 495,573.0 496,572.9 497,572.6 498,572.3 499,571.8 500,571.1 501,570.3 502,569.4 503,568.4 504,567.2 505,565.9 506,564.5 507,563.0 508,561.3 509,559.5 510,557.6 511,555.6 512,553.4 513,551.1 514,548.8 515,546.3 516,543.7 517,541.0 518,538.2 519,535.2 520,532.2 521,529.1 522,525.9 523,522.6 524,519.3 525,515.8 526,512.3 527,508.7 528,505.0 529,501.2 530,497.4 531,493.5 532,489.6 533,485.6 534,481.6 535,477.5 536,473.3 537,469.2 538,465.0 539,460.7 540,456.5 541,452.2 542,447.9 543,443.6 544,439.2 545,434.9 546,430.5 547,426.2 548,421.9 549,417.6 550,413.2 551,409.0 552,404.7 553,400.5 554,396.2 555,392.1 556,387.9 557,383.8 558,379.8 559,375.8 560,371.8 561,368.0 562,364.1 563,360.4 564,356.7 565,353.1 566,349.5 567,346.1 568,342.7 569,339.4 570,336.2 571,333.1 572,330.1 573,327.1 574,324.3 575,321.6 576,319.0 577,316.5 578,314.1 579,311.8 580,309.6 581,307.6 582,305.7 583,303.9 584,302.2 585,300.6 586,299.2 587,297.9 588,296.7 589,295.7 590,294.7 591,294.0 592,293.3 593,292.8 594,292.4 595,292.1 596,292.0 597,292.0 598,292.2 599,292.5 600,292.9 601,293.4 602,294.1 603,294.9 604,295.9 605,296.9 606,298.1 607,299.5 608,300.9 609,302.5 610,304.2 611,306.0 612,308.0 613,310.1 614,312.3 615,314.6 616,317.0 617,319.5 618,322.1 619,324.9 620,327.7 621,330.7 622,333.7 623,336.8 624,340.0 625,343.4 626,346.8 627,350.2 628,353.8 629,357.4 630,361.1 631,364.9 632,368.7 633,372.6 634,376.6 635,380.6 636,384.7 637,388.8 638,392.9 639,397.1 640,401.3 641,405.5 642,409.8 643,414.1 644,418.4 645,422.7 646,427.1 647,431.4 648,435.8 649,440.1 650,444.4 651,448.7 652,453.0 653,457.3 654,461.6 655,465.8 656,470.0 657,474.2 658,478.3 659,482.4 660,486.4 661,490.4 662,494.3 663,498.2 664,502.0 665,505.7 666,509.4 667,513.0 668,516.5 669,520.0 670,523.3 671,526.6 672,529.8 673,532.8 674,535.8 675,538.7 676,541.5 677,544.2 678,546.8 679,549.2 680,551.6 681,553.8 682,556.0 683,558.0 684,559.9 685,561.7 686,563.3 687,564.8 688,566.2 689,567.5 690,568.6 691,569.6 692,570.5 693,571.3 694,571.9 695,572.4 696,572.7 697,572.9 698,573.0 699,572.9 700,572.8 701,572.4 702,572.0 703,571.4 704,570.7 705,569.8 706,568.8 707,567.7 708,566.5 709,565.1 710,563.6 711,562.0 712,560.2 713,558.4 714,556.4 715,554.3 716,552.1 717,549.7 718,547.3 719,544.7 720,542.1 721,539.3 722,536.4 723,533.4 724,530.4 725,527.2 726,524.0 727,520.6 728,517.2 729,513.7 730,510.1 731,506.5 732,502.8 733,499.0 734,495.1 735,491.2 736,487.2 737,483.2 738,479.1 739,475.0 740,470.9 741,466.7 742,462.4 743,458.2 744,453.9 745,449.6 746,445.3 747,441.0 748,436.6 749,432.3 750,427.9 751,423.6 752,419.3 753,415.0 754,410.7 755,406.4 756,402.1 757,397.9 758,393.7 759,389.6 760,385.5 761,381.4 762,377.4 763,373.4 764,369.5 765,365.7 766,361.9 767,358.2 768,354.5 769,350.9 770,347.4 771,344.0 772,340.7 773,337.5 774,334.3 775,331.3 776,328.3 777,325.4 778,322.7 779,320.0 780,317.5 781,315.0 782,312.7 783,310.5 784,308.4 785,306.4 786,304.6 787,302.8 788,301.2 789,299.7 790,298.4 791,297.2 792,296.1 793,295.1 794,294.2 795,293.5 796,293.0 797,292.5 798,292.2 799,292.0 800,292.0 801,292.1 802,292.3 803,292.7 804,293.2 805,293.8 806,294.6 807,295.5 808,296.5 809,297.6 810,298.9 811,300.3 812,301.9 813,303.5 814,305.3 815,307.2 816,309.2 817,311.4 818,313.6 819,316.0 820,318.5 821,321.1 822,323.8 823,326.6 824,329.5 825,332.5 826,335.6 827,338.7 828,342.0 829,345.4 830,348.8 831,352.4 832,356.0 833,359.6 834,363.4 835,367.2 836,371.1 837,375.0 838,379.0 839,383.0 840,387.1 841,391.2 842,395.4 843,399.6 844,403.8 845,408.1 846,412.4 847,416.7 848,421.0 849,425.3 850,429.7 851,434.0 852,438.4 853,442.7 854,447.0 855,451.3 856,455.6 857,459.9 858,464.1 859,468.3 860,472.5 861,476.7 862,480.8 863,484.8 864,488.8 865,492.8 866,496.7 867,500.5 868,504.2 869,507.9 870,511.6 871,515.1 872,518.6 873,522.0 874,525.3 875,528.5 876,531.6 877,534.6 878,537.6 879,540.4 880,543.1 881,545.8 882,548.3 883,550.7 884,553.0 885,555.1 886,557.2 887,559.1 888,561.0 889,562.7 890,564.2 891,565.7 892,567.0 893,568.2 894,569.2 895,570.2 896,571.0 897,571.6 898,572.2 899,572.6 900,572.8 901,573.0 902,573.0 903,572.8 904,572.6 905,572.2 906,571.6 907,571.0 908,570.2 909,569.2 910,568.2 911,567.0 912,565.7 913,564.2 914,562.7 915,561.0 916,559.1 917,557.2 918,555.1 919,553.0 920,550.7 921,548.3 922,545.8 923,543.1 924,540.4 925,537.6 926,534.6 927,531.6 928,528.5 929,525.3 930,522.0 931,518.6 932,515.1 933,511.6 934,507.9 935,504.2 936,500.5 937,496.7 938,492.8 939,488.8 940,484.8 941,480.8 942,476.7 943,472.5 944,468.3 945,464.1 946,459.9 947,455.6 948,451.3 949,447.0 950,442.7 951,438.4 952,434.0 953,429.7 954,425.3 955,421.0 956,416.7 957,412.4 958,408.1 959,403.8 960,399.6 961,395.4 962,391.2 963,387.1 964,383.0 965,379.0 966,375.0 967,371.1 968,367.2 969,363.4 970,359.6 971,356.0 972,352.4 973,348.8 974,345.4 975,342.0 976,338.7 977,335.6 978,332.5 979,329.5 980,326.6 981,323.8 982,321.1 983,318.5 984,316.0 985,313.6 986,311.4 987,309.2 988,307.2 989,305.3 990,303.5 991,301.9 992,300.3 993,298.9 994,297.6 995,296.5 996,295.5 997,294.6 998,293.8 999,293.2 1000,292.7 1001,292.3 1002,292.1 1003,292.0 1004,292.0 1005,292.2 1006,292.5 1007,293.0 1008,293.5 1009,294.2 1010,295.1 1011,296.1 1012,297.2 1013,298.4 1014,299.7 1015,301.2 1016,302.8 1017,304.6 1018,306.4 1019,308.4 1020,310.5 1021,312.7 1022,315.0 1023,317.5 1024,320.0 1025,322.7 1026,325.4 1027,328.3 1028,331.3 1029,334.3 1030,337.5 1031,340.7 1032,344.0 1033,347.4 1034,350.9 1035,354.5 1036,358.2 1037,361.9 1038,365.7 1039,369.5 1040,373.4 1041,377.4 1042,381.4 1043,385.5 1044,389.6 1045,393.7 1046,397.9 1047,402.1 1048,406.4 1049,410.7 1050,415.0 1051,419.3 1052,423.6"/>
<rect x="35" y="141" width="2" height="569" fill="#d8d8d8"/>
<rect x="35" y="141" width="1020" height="2" fill="#d8d8d8"/>
<rect x="1053" y="141" width="2" height="569" fill="#fff"/>
<rect x="35" y="708" width="1020" height="2" fill="#fff"/>
<rect x="36" y="713" width="120" height="20" fill="#000"/>
<rect x="934" y="713" width="118" height="20" fill="#000"/>
<path d="M186 115.5 h11.5 v-16 h10.5 v16 h16.5" fill="none" stroke="#1a1a1a" stroke-width="4"/>
<path d="M186 115.5 h11.5 v-16 h10.5 v16 h16.5" fill="none" stroke="#6fe070" stroke-width="2"/>
<path d="M461 103 h-2 v14 h2 M626 103 h2 v14 h-2" fill="none" stroke="#1fd0e0" stroke-width="2"/>
<polyline fill="none" stroke="#e0e0e0" stroke-width="1.5" points="460,111 465,108.3 471.5,112.8 478,108.3 484.5,112.8 491,108.3"/>
<polyline fill="none" stroke="#00c800" stroke-width="1.5" points="491,108.3 497.5,112.8 504,108.3 510.5,112.8 517,108.3 523.5,112.8 530,108.3 536.5,112.8 543,108.3 549.5,112.8 556,108.3 562.5,112.8 569,108.3 575.5,112.8 582,108.3 588.5,112.8 595.5,108.3"/>
<polyline fill="none" stroke="#e0e0e0" stroke-width="1.5" points="595.5,108.3 602,112.8 608.5,108.3 615,112.8 621.5,108.3 626,111"/>
<path d="M541 97.8 h6.5 M544.2 97.8 v6" stroke="#e07800" stroke-width="1.6"/>
<path d="M537 125 h14 v9.5 l-7 6.5 l-7 -6.5 z" fill="#ff8a00" stroke="#102040" stroke-width="0.6"/>
<path d="M540 128.2 h8 M544 128.2 v6.5" stroke="#302000" stroke-width="1.6"/>
<path d="M11 420 h16 l7 6 l-7 6 h-16 z" fill="#ffff00" stroke="#101840" stroke-width="0.8"/>
<path d="M19.6 424 l1.6 -1.2 v7" fill="none" stroke="#703000" stroke-width="1.5"/>
<path d="M1076 426.5 h-14 l-7 6 l7 6 h14 z" fill="#ffff00" stroke="#101840" stroke-width="0.8"/>
<path d="M1066 429 h7.5 M1070 429 v7" stroke="#1a3a00" stroke-width="1.5"/>
<path d="M951 116.2 h7 v-16.8 h6.5" fill="none" stroke="#f0e000" stroke-width="1.6"/>
<path d="M953 109.8 l5 -4.5 l5 4.5 z" fill="#f0e000"/>

</svg>
<div class="a sc" style="left:22px;top:99px;font-size:14px;color:#00f000">Trig'D</div>
<div class="a sc" style="left:42px;top:148px;font-size:14px;font-weight:bold;letter-spacing:0.9px;transform:scaleX(1.13);transform-origin:0 0;color:#00ff00">Pass: 124 wfs</div>
<div class="a sc" style="left:42px;top:175px;font-size:14px;font-weight:bold;letter-spacing:0.9px;transform:scaleX(1.13);transform-origin:0 0;color:#ff0000">Fail: 0 wfs</div>
<div class="a sc" style="left:42px;top:202px;font-size:14px;font-weight:bold;letter-spacing:0.9px;transform:scaleX(1.13);transform-origin:0 0;color:#00e8f0">Total: 124 wfs</div>
<div class="a sc" style="left:37px;top:715px;width:36px;height:17px;background:#ffff00"></div>
<div class="a sc" style="left:39px;top:715px;font-size:14px;color:#000">CH1</div>
<div class="a sc" style="left:75px;top:714px;font-size:14px;color:#f0f000">∿</div><div class="a sc" style="left:95px;top:715px;font-size:14px;color:#f0f000">500mV</div>
<div class="a sc" style="left:937px;top:715px;font-size:14px;color:#ff8c00">Time: 500.0us</div>
<div class="a sc" style="left:970px;top:100px;width:36px;height:17px;background:#ffff00"></div>
<div class="a sc" style="left:972px;top:100px;font-size:14px;color:#000">CH1</div>
<div class="a sc" style="left:1012px;top:100px;font-size:14px;letter-spacing:1.35px;color:#f0f000">-47.1mV</div>
<div id="rstrip" class="a"></div>
<div id="panel" class="a"></div>
<div class="a" style="left:1085px;top:120px;width:205px;height:1px;background:#898c95"></div>
<div class="a" style="left:1129px;top:97px;width:38px;height:24px;background:linear-gradient(180deg,#f3f3f3 0,#ebebeb 50%,#dddddd 51%,#d0d0d0 100%);border:1px solid #898c95;border-bottom:none"></div>
<div class="a p" style="left:1133px;top:104px;font-size:10.8px;letter-spacing:-0.3px;color:#000">DDS</div>
<div class="a" style="left:1085px;top:95px;width:45px;height:26px;background:#fff;border:1px solid #898c95;border-bottom:none"></div>
<div class="a p" style="left:1091px;top:102px;font-size:10.8px;letter-spacing:-0.3px;color:#000">DSO</div>

<div class="a gb" style="left:1091px;top:129px;width:183px;height:90px"></div>
<div class="a gl" style="left:1157px;top:122px">Horizontal</div>
<div class="a p" style="left:1102px;top:133px;letter-spacing:-0.45px">Time/Div</div>
<div class="a cb" style="left:1096px;top:147px;width:83px;height:21px">1.00 us</div>
<div class="a p" style="left:1102px;top:176px;letter-spacing:-0.35px">Delay Time</div>
<div class="a" style="left:1096px;top:193px;width:83px;height:23px;background:#fff;border:1px solid #abadb3;border-radius:2px"></div>
<div class="a p" style="left:1113px;top:198px">0.00ns</div>
<div class="a" style="left:1162px;top:195px;width:15px;height:9px;border:1px solid #b8b8b8;border-radius:2px;background:linear-gradient(#f4f4f4,#e2e2e2)"></div>
<div class="a" style="left:1162px;top:204px;width:15px;height:9px;border:1px solid #b8b8b8;border-radius:2px;background:linear-gradient(#f4f4f4,#e2e2e2)"></div>
<div class="a" style="left:1166px;top:197px;border-left:3.5px solid transparent;border-right:3.5px solid transparent;border-bottom:3.5px solid #4a5fa8"></div>
<div class="a" style="left:1166px;top:207px;border-left:3.5px solid transparent;border-right:3.5px solid transparent;border-top:3.5px solid #4a5fa8"></div>

<div class="a gb" style="left:1091px;top:236px;width:183px;height:126px"></div>
<div class="a gl" style="left:1163px;top:229px">Vertical</div>
<div class="a cb" style="left:1096px;top:244px;width:83px;height:22px">CH1</div>
<div class="a cb" style="left:1096px;top:270px;width:83px;height:22px">1.00V</div>
<div class="a cb" style="left:1096px;top:298px;width:83px;height:22px">DC</div>
<div class="a cb" style="left:1096px;top:328px;width:83px;height:22px">X1</div>
<div class="a" style="left:1198px;top:249px;width:13px;height:13px;border:1px solid #8e8f8f;background:linear-gradient(135deg,#e8e8e8,#fafafa)"></div>
<svg class="a" style="left:1198px;top:249px" width="13" height="13"><path d="M3 6.5 L5.5 9.5 L10 2.5" fill="none" stroke="#4a5fa8" stroke-width="1.6"/></svg>
<div class="a p" style="left:1217px;top:250px;letter-spacing:-0.6px">ON/OFF</div>

<div class="a gb" style="left:1091px;top:378px;width:183px;height:80px"></div>
<div class="a gl" style="left:1149px;top:371px">Basic Trigger</div>
<div class="a p" style="left:1102px;top:397px">Trigger Mode</div>
<div class="a cb" style="left:1192px;top:391px;width:74px;height:22px">Edge</div>
<div class="a p" style="left:1102px;top:432px">Trigger Sweep</div>
<div class="a cb" style="left:1192px;top:427px;width:74px;height:22px">Auto</div>

<div class="a gb" style="left:1091px;top:468px;width:183px;height:200px;border-bottom:none;border-radius:3px 3px 0 0;height:180px"></div>
<div class="a gl" style="left:1150px;top:463px">Edge Trigger</div>
<div class="a p" style="left:1102px;top:486px">Trigger Source</div>
<div class="a cb" style="left:1192px;top:482px;width:74px;height:22px">CH1</div>
<div class="a p" style="left:1102px;top:518px">Trigger Slope</div>
<div class="a cb" style="left:1192px;top:514px;width:74px;height:21px">&nbsp;-</div>

<svg class="a" style="left:1185px;top:133px" width="90" height="90" viewBox="0 0 90 90">
<defs><linearGradient id="kg" x1="1" y1="0" x2="0" y2="1"><stop offset="0" stop-color="#d8d8d8"/><stop offset="1" stop-color="#8a8a8a"/></linearGradient></defs>
<path d="M16.7 70 A37.5 37.5 0 1 1 69.7 70" fill="none" stroke="#000" stroke-width="1.1"/>
<path d="M17.7 69 A36.2 36.2 0 1 1 68.7 69" fill="none" stroke="#fff" stroke-width="1.6"/>
<circle cx="43.2" cy="43.5" r="34.6" fill="url(#kg)" stroke="#505050" stroke-width="0.8"/>
<circle cx="43.2" cy="43.5" r="28.5" fill="#000088"/>
<circle cx="43.2" cy="43.5" r="26.5" fill="#0000cc"/>
<path d="M18.5 68.2 L11.4 75.3 M67.9 68.2 L75 75.3" stroke="#000" stroke-width="1.4"/>
<path d="M50.3 42.1 L66 37.3" stroke="#d8d840" stroke-width="2.2"/>
</svg>
<svg class="a" style="left:1185px;top:268px" width="90" height="90" viewBox="0 0 90 90">
<path d="M16.7 70 A37.5 37.5 0 1 1 69.7 70" fill="none" stroke="#000" stroke-width="1.1"/>
<path d="M17.7 69 A36.2 36.2 0 1 1 68.7 69" fill="none" stroke="#fff" stroke-width="1.6"/>
<circle cx="43.2" cy="43.5" r="34.6" fill="url(#kg)" stroke="#505050" stroke-width="0.8"/>
<circle cx="43.2" cy="43.5" r="28.5" fill="#7a7a00"/>
<circle cx="43.2" cy="43.5" r="26.5" fill="#ffff00"/>
<path d="M18.5 68.2 L11.4 75.3 M67.9 68.2 L75 75.3" stroke="#000" stroke-width="1.4"/>
<path d="M20.9 35 L35.9 41.2" stroke="#3030c0" stroke-width="2.2"/>
</svg>

<div id="status" class="a"></div>
<div class="a st" style="left:12px">Connected</div>
<div class="a st" style="left:168px">Stop</div>
<div class="a st" style="left:1160px;font-size:12.8px">2016-05-13&nbsp;&nbsp;08:26</div>
<div class="a" style="left:1078px;top:736px;width:214px;height:1px;background:#a0a0a0"></div>
<svg class="a" style="left:1280px;top:748px" width="11" height="11"><g fill="#b9b9b9"><rect x="8" y="0" width="2" height="2"/><rect x="5" y="3" width="2" height="2"/><rect x="8" y="3" width="2" height="2"/><rect x="2" y="6" width="2" height="2"/><rect x="5" y="6" width="2" height="2"/><rect x="8" y="6" width="2" height="2"/></g></svg>
</body></html>
